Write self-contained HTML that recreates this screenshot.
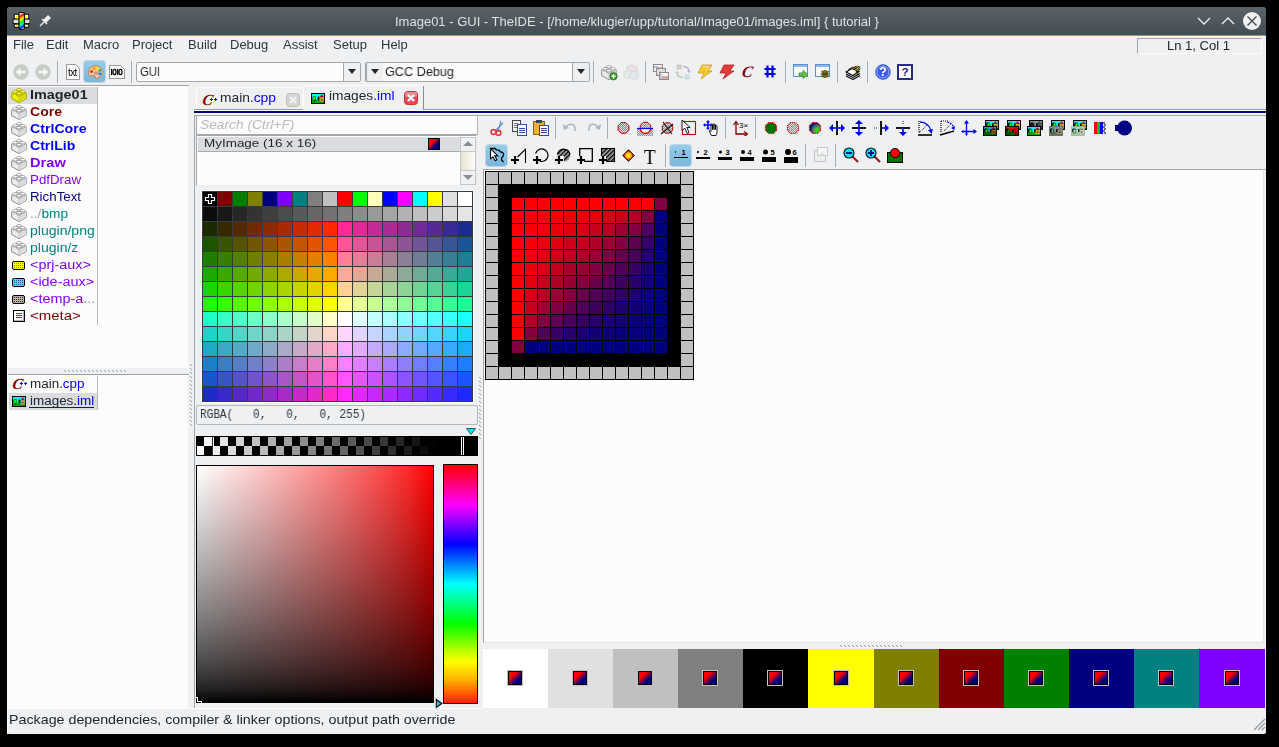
<!DOCTYPE html>
<html><head><meta charset="utf-8"><title>TheIDE</title>
<style>
html,body{margin:0;padding:0;}
body{width:1279px;height:747px;background:#000;position:relative;overflow:hidden;font-family:"Liberation Sans",sans-serif;}
.r{position:absolute;box-sizing:border-box;}
.t{position:absolute;white-space:pre;will-change:transform;}
</style></head><body>
<div class="r" style="left:7px;top:7px;width:1259px;height:727px;background:#eff0f1;border-radius:4px 4px 2px 2px;"></div>
<div class="r" style="left:7px;top:36px;width:1px;height:698px;background:#fafafa;"></div>
<div class="r" style="left:7px;top:7px;width:1259px;height:28px;background:linear-gradient(#5a6368,#454c52);border-radius:4px 4px 0 0;"></div>
<div class="r" style="left:7px;top:35px;width:1259px;height:1px;background:#3daee9;"></div>
<div class="r" style="left:8px;top:36px;width:1257px;height:1px;background:#f6f2ef;"></div>
<div class="t" style="left:395px;top:15.00px;font-size:13px;line-height:13px;color:#dfe1e3;font-weight:normal;font-family:'Liberation Sans';font-style:normal;">Image01 - GUI - TheIDE - [/home/klugier/upp/tutorial/Image01/images.iml] { tutorial }</div>
<svg class="r" style="left:12px;top:12px;" width="18" height="18" viewBox="0 0 18 18">
      <rect x="1.8" y="1.8" width="15.4" height="5.5" rx="1.2" fill="#0c0c0c"/>
      <rect x="0.5" y="6.6" width="18" height="5.5" rx="1.2" fill="#0c0c0c"/>
      <rect x="1.8" y="11.7" width="15.4" height="4" rx="1.2" fill="#0c0c0c"/>
      <rect x="2.8" y="2.8" width="3.8" height="3.5" fill="#fff"/><rect x="4" y="3.8" width="2.6" height="2.5" fill="#ffee00"/>
      <rect x="12.8" y="2.8" width="3.4" height="3.5" fill="#fff"/><rect x="12.8" y="3.8" width="2" height="2.5" fill="#ffee00"/>
      <rect x="1.5" y="7.6" width="5.1" height="3.5" fill="#dedede"/><rect x="12.8" y="7.6" width="4.7" height="3.5" fill="#dedede"/>
      <rect x="2.8" y="12.7" width="3.8" height="2" fill="#fff"/><rect x="4" y="12.9" width="2.6" height="1.4" fill="#ffee00"/>
      <rect x="12.8" y="12.7" width="3.4" height="2" fill="#fff"/><rect x="12.8" y="12.9" width="1.8" height="1.4" fill="#ffee00"/>
      <rect x="6.6" y="0" width="6.2" height="17.8" rx="1.5" fill="#0c0c0c"/>
      <defs><linearGradient id="rb" gradientUnits="userSpaceOnUse" x1="7.6" y1="1" x2="16.5" y2="13.5"><stop offset="0.1" stop-color="#ddd"/><stop offset="0.2" stop-color="#ff0000"/><stop offset="0.38" stop-color="#ffff00"/><stop offset="0.55" stop-color="#00ff00"/><stop offset="0.7" stop-color="#00ffff"/><stop offset="0.85" stop-color="#0000ff"/><stop offset="0.93" stop-color="#ccc"/></linearGradient></defs>
      <rect x="7.6" y="1" width="4.2" height="15.8" fill="url(#rb)"/>
    </svg>
<svg class="r" style="left:39px;top:14px;" width="13" height="13" viewBox="0 0 13 13"><path d="M1 12 L5 8" stroke="#eee" stroke-width="1.3"/><path d="M4 6 L7 9 L12 4 L9 1 Z" fill="#eee"/><path d="M3 5 L8 10" stroke="#eee" stroke-width="1.5"/></svg>
<svg class="r" style="left:1196px;top:14px;" width="16" height="14" viewBox="0 0 16 14"><path d="M2 4 L8 10 L14 4" stroke="#eef0f1" stroke-width="1.3" fill="none"/></svg>
<svg class="r" style="left:1220px;top:14px;" width="16" height="14" viewBox="0 0 16 14"><path d="M2 10 L8 4 L14 10" stroke="#eef0f1" stroke-width="1.3" fill="none"/></svg>
<svg class="r" style="left:1242px;top:11px;" width="20" height="20" viewBox="0 0 20 20"><circle cx="10" cy="10" r="9" fill="#eef0f1"/><path d="M5.5 5.5 L14.5 14.5 M14.5 5.5 L5.5 14.5" stroke="#454c53" stroke-width="1.4"/></svg>
<div class="t" style="left:13px;top:38.00px;font-size:13px;line-height:13px;color:#31363b;font-weight:normal;font-family:'Liberation Sans';font-style:normal;">File</div>
<div class="t" style="left:46px;top:38.00px;font-size:13px;line-height:13px;color:#31363b;font-weight:normal;font-family:'Liberation Sans';font-style:normal;">Edit</div>
<div class="t" style="left:82.5px;top:38.00px;font-size:13px;line-height:13px;color:#31363b;font-weight:normal;font-family:'Liberation Sans';font-style:normal;">Macro</div>
<div class="t" style="left:132px;top:38.00px;font-size:13px;line-height:13px;color:#31363b;font-weight:normal;font-family:'Liberation Sans';font-style:normal;">Project</div>
<div class="t" style="left:188px;top:38.00px;font-size:13px;line-height:13px;color:#31363b;font-weight:normal;font-family:'Liberation Sans';font-style:normal;">Build</div>
<div class="t" style="left:230px;top:38.00px;font-size:13px;line-height:13px;color:#31363b;font-weight:normal;font-family:'Liberation Sans';font-style:normal;">Debug</div>
<div class="t" style="left:282.5px;top:38.00px;font-size:13px;line-height:13px;color:#31363b;font-weight:normal;font-family:'Liberation Sans';font-style:normal;">Assist</div>
<div class="t" style="left:332.5px;top:38.00px;font-size:13px;line-height:13px;color:#31363b;font-weight:normal;font-family:'Liberation Sans';font-style:normal;">Setup</div>
<div class="t" style="left:381px;top:38.00px;font-size:13px;line-height:13px;color:#31363b;font-weight:normal;font-family:'Liberation Sans';font-style:normal;">Help</div>
<div class="r" style="left:1137px;top:38px;width:125px;height:16px;background:#eff0f1;border-top:1px solid #a4a7aa;border-left:1px solid #a4a7aa;border-bottom:1px solid #fcfcfc;border-right:1px solid #fcfcfc;"></div>
<div class="t" style="left:1167px;top:39.00px;font-size:13px;line-height:13px;color:#232629;font-weight:normal;font-family:'Liberation Sans';font-style:normal;">Ln 1, Col 1</div>
<svg class="r" style="left:12px;top:63px;" width="18" height="18" viewBox="0 0 18 18"><circle cx="9" cy="9" r="7.8" fill="#c5cfc5"/><path d="M13.5 9 H4.5" stroke="#f4f6f4" stroke-width="2.6"/><path d="M4 9 L8.5 4.5 V13.5 Z" fill="#f4f6f4"/></svg>
<svg class="r" style="left:34px;top:63px;" width="18" height="18" viewBox="0 0 18 18"><circle cx="9" cy="9" r="7.8" fill="#c5cfc5"/><path d="M4.5 9 H13.5" stroke="#f4f6f4" stroke-width="2.6"/><path d="M14 9 L9.5 4.5 V13.5 Z" fill="#f4f6f4"/></svg>
<div class="r" style="left:57px;top:61px;width:1px;height:22px;background:#a9acaf;"></div>
<svg class="r" style="left:66px;top:64px;" width="14" height="16" viewBox="0 0 14 16" shape-rendering="crispEdges"><path d="M0.5 0.5 H9.5 L13.5 4.5 V15.5 H0.5 Z" fill="#fff" stroke="#9a9a9a"/></svg>
<div class="t" style="left:67.8px;top:68.03px;font-size:10px;line-height:10px;color:#000;font-weight:normal;font-family:'Liberation Sans';font-style:normal;letter-spacing:-0.6px;">txt</div>
<div class="r" style="left:84px;top:61px;width:21px;height:21px;background:linear-gradient(#93cdea,#7db6dc);border-radius:3px;box-shadow:0 0 0 1px rgba(120,160,190,0.35);"></div>
<svg class="r" style="left:87px;top:64px;" width="16" height="16" viewBox="0 0 16 16"><path d="M3 4 C6 0.5 13 1 15 6 C16.5 10 13 14 9.5 14.5 C8 14.5 8.5 12 7 11.5 C5.5 11 4 13 2.5 11.5 C0.5 9.5 1.5 6 3 4 Z" fill="#f2c9a3" stroke="#c07a45" stroke-width="1"/>
      <circle cx="4.5" cy="7.5" r="1.6" fill="#e53935"/><circle cx="7" cy="4.5" r="1.6" fill="#ff9800"/><circle cx="10.2" cy="4" r="1.6" fill="#fdd835"/>
      <circle cx="12.8" cy="6.5" r="1.6" fill="#4caf50"/><circle cx="12.8" cy="9.8" r="1.6" fill="#1e88e5"/><circle cx="9" cy="9" r="1.3" fill="none" stroke="#c07a45"/></svg>
<svg class="r" style="left:109px;top:65px;" width="16" height="14" viewBox="0 0 16 14" shape-rendering="crispEdges"><path d="M0.5 0.5 H11.5 L15.5 4.5 V13.5 H0.5 Z" fill="#fff" stroke="#9a9a9a"/></svg>
<svg class="r" style="left:109px;top:65px;shape-rendering:auto;" width="16" height="14" viewBox="0 0 16 14" shape-rendering="crispEdges"><rect x="2" y="4" width="1.3" height="6" fill="#000"/><rect x="8" y="4" width="1.3" height="6" fill="#000"/><ellipse cx="5.5" cy="7" rx="1.5" ry="2.6" fill="none" stroke="#000" stroke-width="1.2"/><ellipse cx="11.5" cy="7" rx="1.5" ry="2.6" fill="none" stroke="#000" stroke-width="1.2"/></svg>
<div class="r" style="left:131px;top:61px;width:1px;height:22px;background:#a9acaf;"></div>
<div class="r" style="left:136px;top:62px;width:225px;height:20px;background:#fcfcfc;border:1px solid #a5a8ab;border-radius:2px;"></div>
<div class="r" style="left:343px;top:63px;width:17px;height:18px;background:#eff0f1;border-left:1px solid #a5a8ab;"></div>
<svg class="r" style="left:347px;top:69px;shape-rendering:auto;" width="10" height="6" viewBox="0 0 10 6" shape-rendering="crispEdges"><path d="M1 0 H9 L5 5 Z" fill="#232629"/></svg>
<div class="t" style="left:139.5px;top:64.50px;font-size:13px;line-height:13px;color:#232629;font-weight:normal;font-family:'Liberation Sans';font-style:normal;transform:scaleX(0.87);transform-origin:0 0;">GUI</div>
<div class="r" style="left:365px;top:62px;width:225px;height:20px;background:#fcfcfc;border:1px solid #a5a8ab;border-left:2px solid #a5a8ab;border-radius:2px;"></div>
<div class="r" style="left:367px;top:63px;width:16px;height:18px;background:#eff0f1;"></div>
<div class="r" style="left:572px;top:63px;width:17px;height:18px;background:#eff0f1;border-left:1px solid #a5a8ab;"></div>
<svg class="r" style="left:370px;top:69px;shape-rendering:auto;" width="10" height="6" viewBox="0 0 10 6" shape-rendering="crispEdges"><path d="M1 0 H9 L5 5 Z" fill="#232629"/></svg>
<svg class="r" style="left:576px;top:69px;shape-rendering:auto;" width="10" height="6" viewBox="0 0 10 6" shape-rendering="crispEdges"><path d="M1 0 H9 L5 5 Z" fill="#232629"/></svg>
<div class="t" style="left:385px;top:64.50px;font-size:13px;line-height:13px;color:#232629;font-weight:normal;font-family:'Liberation Sans';font-style:normal;transform:scaleX(0.975);transform-origin:0 0;">GCC Debug</div>
<div class="r" style="left:593px;top:61px;width:1px;height:22px;background:#a9acaf;"></div>
<svg class="r" style="left:601px;top:64px;" width="17" height="17" viewBox="0 0 17 17">
      <path d="M0.7 5.8 L8 2.2 L15.3 5.8 V11.6 L8 15.6 L0.7 11.6 Z" fill="#ececec" stroke="#8a8a8a" stroke-width="1" stroke-linejoin="round"/>
      <path d="M0.7 5.8 L8 9.4 L15.3 5.8 L8 2.2 Z" fill="#f8f8f8"/>
      <path d="M8 9.4 L15.3 5.8 V11.6 L8 15.6 Z" fill="#dcdcdc"/>
      <path d="M8 9.4 V15.4" stroke="#8a8a8a" stroke-width="0.5" opacity="0.6"/>
      <path d="M5.6 2.6 V4.0 A2.4 1.2 0 0 0 10.4 4.0 V2.6" fill="#e4e4e4" stroke="#8a8a8a" stroke-width="0.8"/><ellipse cx="8" cy="2.6" rx="2.4" ry="1.2" fill="#ffffff" stroke="#8a8a8a" stroke-width="0.6"/><path d="M1.9 4.6 V6.0 A2.4 1.2 0 0 0 6.699999999999999 6.0 V4.6" fill="#e4e4e4" stroke="#8a8a8a" stroke-width="0.8"/><ellipse cx="4.3" cy="4.6" rx="2.4" ry="1.2" fill="#ffffff" stroke="#8a8a8a" stroke-width="0.6"/><path d="M9.299999999999999 4.6 V6.0 A2.4 1.2 0 0 0 14.1 6.0 V4.6" fill="#e4e4e4" stroke="#8a8a8a" stroke-width="0.8"/><ellipse cx="11.7" cy="4.6" rx="2.4" ry="1.2" fill="#ffffff" stroke="#8a8a8a" stroke-width="0.6"/><path d="M5.6 6.6 V8.0 A2.4 1.2 0 0 0 10.4 8.0 V6.6" fill="#e4e4e4" stroke="#8a8a8a" stroke-width="0.8"/><ellipse cx="8" cy="6.6" rx="2.4" ry="1.2" fill="#ffffff" stroke="#8a8a8a" stroke-width="0.6"/>
    </svg>
<svg class="r" style="left:609px;top:72px;" width="9" height="9" viewBox="0 0 9 9"><circle cx="4.5" cy="4.3" r="3.7" fill="#3c9a2c" stroke="#2a6e1e" stroke-width="0.7"/><path d="M4.5 2.2 V6.4 M2.4 4.3 H6.6" stroke="#fff" stroke-width="1.4"/></svg>
<svg class="r" style="left:623px;top:64px;" width="16" height="16" viewBox="0 0 16 16"><g opacity="0.55"><path d="M4 3 L9 1 L14 3 V8 L9 10 L4 8 Z" fill="#e8d8d8" stroke="#c8b0b0" stroke-width="0.8"/><path d="M1 8 L5 6 L9 8 V13 L5 15 L1 13 Z" fill="#e0e8e0" stroke="#b8c8b8" stroke-width="0.8"/><path d="M7 9 L11 7 L15 9 V14 L11 16 L7 14 Z" fill="#dde4ea" stroke="#b0c0cc" stroke-width="0.8"/></g></svg>
<div class="r" style="left:645px;top:61px;width:1px;height:22px;background:#a9acaf;"></div>
<svg class="r" style="left:653px;top:64px;" width="16" height="16" viewBox="0 0 16 16" shape-rendering="crispEdges"><rect x="0.5" y="0.5" width="9" height="7" fill="#f4f4f4" stroke="#8a8a8a"/><rect x="1" y="2" width="4" height="2" fill="#b0b8d8"/><rect x="5" y="3" width="4" height="1" fill="#d8a0a0"/>
      <rect x="3.5" y="4.5" width="9" height="7" fill="#e8e8f0" stroke="#8a8a8a"/><path d="M4 5 L12 11 M12 5 L4 11" stroke="#d8d0a0"/>
      <rect x="6.5" y="8.5" width="9" height="7" fill="#f6f6f6" stroke="#8a8a8a"/><rect x="7" y="12" width="8" height="3" fill="#d8a8a8"/><path d="M7 9 L10 12 L7 15" fill="#c8c8e0"/></svg>
<svg class="r" style="left:675px;top:64px;" width="16" height="16" viewBox="0 0 16 16"><rect x="2" y="1" width="4" height="4" fill="#dccfcf" stroke="#c0b0b0" stroke-width="0.6"/><rect x="10" y="11" width="4" height="4" fill="#cfe6e6" stroke="#b0c8c8" stroke-width="0.6"/><path d="M8 2.5 C12 2.5 14 5 14 8" stroke="#b8b0d0" stroke-width="1.5" fill="none"/><path d="M12 7 L14 9 L16 7" fill="#b8b0d0"/><path d="M8 13.5 C4 13.5 2 11 2 8" stroke="#b8ccb8" stroke-width="1.5" fill="none"/><path d="M0 9 L2 7 L4 9" fill="#b8ccb8"/></svg>
<svg class="r" style="left:697px;top:64px;" width="16" height="16" viewBox="0 0 16 16"><path d="M5 1 H15 L11 7 H15 L4 15 L7 9 H1 Z" fill="#f2c838" stroke="#d4a010" stroke-width="0.8"/><path d="M6 2.5 H12 L9 6" stroke="#fbe99a" stroke-width="1" fill="none"/></svg>
<svg class="r" style="left:719px;top:64px;" width="16" height="16" viewBox="0 0 16 16"><path d="M5 1 H15 L11 7 H15 L4 15 L7 9 H1 Z" fill="#e03a3a" stroke="#b82020" stroke-width="0.8"/></svg>
<svg class="r" style="left:740px;top:63px;" width="16" height="16" viewBox="0 0 16 16"><g transform="translate(0,14.3) skewX(-10)"><text x="1.2" y="0" font-family="Liberation Serif" font-style="italic" font-weight="bold" font-size="16" fill="#800000">C</text></g></svg>
<svg class="r" style="left:764px;top:65px;shape-rendering:auto;" width="12" height="13" viewBox="0 0 12 13" shape-rendering="crispEdges"><path d="M3.5 0.5 V12.5 M8.5 0.5 V12.5 M0.5 4 H11.5 M0.5 9 H11.5" stroke="#0000e0" stroke-width="2.2"/></svg>
<div class="r" style="left:785px;top:61px;width:1px;height:22px;background:#a9acaf;"></div>
<svg class="r" style="left:793px;top:64px;shape-rendering:auto;" width="16" height="16" viewBox="0 0 16 16" shape-rendering="crispEdges"><rect x="0.5" y="0.5" width="14" height="12" fill="#f8f8ff" stroke="#5b8fd6"/><rect x="1" y="1" width="13" height="2" fill="#8fb6ea"/><path d="M6 9 H10 V6.5 L15 10.5 L10 14.5 V12 H6 Z" fill="#6cc04a" stroke="#3d8a2a" stroke-width="0.8"/></svg>
<svg class="r" style="left:815px;top:64px;shape-rendering:auto;" width="16" height="16" viewBox="0 0 16 16" shape-rendering="crispEdges"><rect x="0.5" y="0.5" width="14" height="12" fill="#f8f8ff" stroke="#5b8fd6"/><rect x="1" y="1" width="13" height="2" fill="#8fb6ea"/><ellipse cx="10" cy="10" rx="3.5" ry="4" fill="#6f6a1a"/><path d="M6 7 L14 13 M14 7 L6 13 M5.5 10 H14.5" stroke="#4f4a10" stroke-width="0.9"/></svg>
<div class="r" style="left:837px;top:61px;width:1px;height:22px;background:#a9acaf;"></div>
<svg class="r" style="left:845px;top:64px;" width="16" height="16" viewBox="0 0 16 16"><path d="M1 12 L8 15.5 L15 11.5" stroke="#000" fill="none" stroke-width="1.1"/><path d="M1 10 L8 13.5 L15 9.5" stroke="#000" fill="none" stroke-width="1.1"/><path d="M1 8 L7 4.5 L14 7.5 L8 11.5 Z" fill="#fff" stroke="#000" stroke-width="1.1"/><path d="M3 6 L8 3 L12 5" fill="none" stroke="#000" stroke-width="0.9"/><text x="12" y="10" text-anchor="middle" font-family="Liberation Sans" font-weight="bold" font-size="11" fill="#ffe800" stroke="#000" stroke-width="0.7">?</text></svg>
<div class="r" style="left:867px;top:61px;width:1px;height:22px;background:#a9acaf;"></div>
<svg class="r" style="left:875px;top:64px;" width="16" height="16" viewBox="0 0 16 16"><circle cx="8" cy="8" r="7.4" fill="#3a5ce6" stroke="#2846d0" stroke-width="0.6"/><circle cx="8" cy="8" r="6" fill="none" stroke="#c0ccf8" stroke-width="0.7"/><text x="8" y="12.3" text-anchor="middle" font-family="Liberation Sans" font-weight="bold" font-size="12" fill="#fff">?</text></svg>
<svg class="r" style="left:897px;top:64px;" width="16" height="16" viewBox="0 0 16 16"><rect x="1" y="1" width="14" height="14" fill="#fff" stroke="#2a2a8a" stroke-width="2"/><text x="8" y="12.3" text-anchor="middle" font-family="Liberation Sans" font-weight="bold" font-size="11.5" fill="#202080">?</text></svg>
<div class="r" style="left:8px;top:85px;width:181px;height:1px;background:#9ea2a6;"></div>
<div class="r" style="left:8px;top:86px;width:180px;height:282px;background:#fcfcfc;"></div>
<div class="r" style="left:8px;top:87px;width:89px;height:17px;background:#dadcdf;"></div>
<div class="r" style="left:97px;top:87px;width:1px;height:238px;background:#b5b8bb;"></div>
<svg class="r" style="left:11px;top:87px;" width="17" height="17" viewBox="0 0 17 17">
      <path d="M0.7 5.8 L8 2.2 L15.3 5.8 V11.6 L8 15.6 L0.7 11.6 Z" fill="#eeee00" stroke="#9a9a00" stroke-width="1" stroke-linejoin="round"/>
      <path d="M0.7 5.8 L8 9.4 L15.3 5.8 L8 2.2 Z" fill="#ffff40"/>
      <path d="M8 9.4 L15.3 5.8 V11.6 L8 15.6 Z" fill="#dada00"/>
      <path d="M8 9.4 V15.4" stroke="#9a9a00" stroke-width="0.5" opacity="0.6"/>
      <path d="M5.6 2.6 V4.0 A2.4 1.2 0 0 0 10.4 4.0 V2.6" fill="#e0e000" stroke="#9a9a00" stroke-width="0.8"/><ellipse cx="8" cy="2.6" rx="2.4" ry="1.2" fill="#ffff60" stroke="#9a9a00" stroke-width="0.6"/><path d="M1.9 4.6 V6.0 A2.4 1.2 0 0 0 6.699999999999999 6.0 V4.6" fill="#e0e000" stroke="#9a9a00" stroke-width="0.8"/><ellipse cx="4.3" cy="4.6" rx="2.4" ry="1.2" fill="#ffff60" stroke="#9a9a00" stroke-width="0.6"/><path d="M9.299999999999999 4.6 V6.0 A2.4 1.2 0 0 0 14.1 6.0 V4.6" fill="#e0e000" stroke="#9a9a00" stroke-width="0.8"/><ellipse cx="11.7" cy="4.6" rx="2.4" ry="1.2" fill="#ffff60" stroke="#9a9a00" stroke-width="0.6"/><path d="M5.6 6.6 V8.0 A2.4 1.2 0 0 0 10.4 8.0 V6.6" fill="#e0e000" stroke="#9a9a00" stroke-width="0.8"/><ellipse cx="8" cy="6.6" rx="2.4" ry="1.2" fill="#ffff60" stroke="#9a9a00" stroke-width="0.6"/>
    </svg>
<div class="t" style="left:30px;top:88.54px;font-size:12px;line-height:12px;font-weight:bold;transform:scaleX(1.2);transform-origin:0 0;"><span style="color:#232629">Image01</span></div>
<svg class="r" style="left:11px;top:104px;" width="17" height="17" viewBox="0 0 17 17">
      <path d="M0.7 5.8 L8 2.2 L15.3 5.8 V11.6 L8 15.6 L0.7 11.6 Z" fill="#ececec" stroke="#8a8a8a" stroke-width="1" stroke-linejoin="round"/>
      <path d="M0.7 5.8 L8 9.4 L15.3 5.8 L8 2.2 Z" fill="#f8f8f8"/>
      <path d="M8 9.4 L15.3 5.8 V11.6 L8 15.6 Z" fill="#dcdcdc"/>
      <path d="M8 9.4 V15.4" stroke="#8a8a8a" stroke-width="0.5" opacity="0.6"/>
      <path d="M5.6 2.6 V4.0 A2.4 1.2 0 0 0 10.4 4.0 V2.6" fill="#e4e4e4" stroke="#8a8a8a" stroke-width="0.8"/><ellipse cx="8" cy="2.6" rx="2.4" ry="1.2" fill="#ffffff" stroke="#8a8a8a" stroke-width="0.6"/><path d="M1.9 4.6 V6.0 A2.4 1.2 0 0 0 6.699999999999999 6.0 V4.6" fill="#e4e4e4" stroke="#8a8a8a" stroke-width="0.8"/><ellipse cx="4.3" cy="4.6" rx="2.4" ry="1.2" fill="#ffffff" stroke="#8a8a8a" stroke-width="0.6"/><path d="M9.299999999999999 4.6 V6.0 A2.4 1.2 0 0 0 14.1 6.0 V4.6" fill="#e4e4e4" stroke="#8a8a8a" stroke-width="0.8"/><ellipse cx="11.7" cy="4.6" rx="2.4" ry="1.2" fill="#ffffff" stroke="#8a8a8a" stroke-width="0.6"/><path d="M5.6 6.6 V8.0 A2.4 1.2 0 0 0 10.4 8.0 V6.6" fill="#e4e4e4" stroke="#8a8a8a" stroke-width="0.8"/><ellipse cx="8" cy="6.6" rx="2.4" ry="1.2" fill="#ffffff" stroke="#8a8a8a" stroke-width="0.6"/>
    </svg>
<div class="t" style="left:30px;top:105.54px;font-size:12px;line-height:12px;font-weight:bold;transform:scaleX(1.17);transform-origin:0 0;"><span style="color:#800000">Core</span></div>
<svg class="r" style="left:11px;top:121px;" width="17" height="17" viewBox="0 0 17 17">
      <path d="M0.7 5.8 L8 2.2 L15.3 5.8 V11.6 L8 15.6 L0.7 11.6 Z" fill="#ececec" stroke="#8a8a8a" stroke-width="1" stroke-linejoin="round"/>
      <path d="M0.7 5.8 L8 9.4 L15.3 5.8 L8 2.2 Z" fill="#f8f8f8"/>
      <path d="M8 9.4 L15.3 5.8 V11.6 L8 15.6 Z" fill="#dcdcdc"/>
      <path d="M8 9.4 V15.4" stroke="#8a8a8a" stroke-width="0.5" opacity="0.6"/>
      <path d="M5.6 2.6 V4.0 A2.4 1.2 0 0 0 10.4 4.0 V2.6" fill="#e4e4e4" stroke="#8a8a8a" stroke-width="0.8"/><ellipse cx="8" cy="2.6" rx="2.4" ry="1.2" fill="#ffffff" stroke="#8a8a8a" stroke-width="0.6"/><path d="M1.9 4.6 V6.0 A2.4 1.2 0 0 0 6.699999999999999 6.0 V4.6" fill="#e4e4e4" stroke="#8a8a8a" stroke-width="0.8"/><ellipse cx="4.3" cy="4.6" rx="2.4" ry="1.2" fill="#ffffff" stroke="#8a8a8a" stroke-width="0.6"/><path d="M9.299999999999999 4.6 V6.0 A2.4 1.2 0 0 0 14.1 6.0 V4.6" fill="#e4e4e4" stroke="#8a8a8a" stroke-width="0.8"/><ellipse cx="11.7" cy="4.6" rx="2.4" ry="1.2" fill="#ffffff" stroke="#8a8a8a" stroke-width="0.6"/><path d="M5.6 6.6 V8.0 A2.4 1.2 0 0 0 10.4 8.0 V6.6" fill="#e4e4e4" stroke="#8a8a8a" stroke-width="0.8"/><ellipse cx="8" cy="6.6" rx="2.4" ry="1.2" fill="#ffffff" stroke="#8a8a8a" stroke-width="0.6"/>
    </svg>
<div class="t" style="left:30px;top:122.54px;font-size:12px;line-height:12px;font-weight:bold;transform:scaleX(1.18);transform-origin:0 0;"><span style="color:#0000ff">CtrlCore</span></div>
<svg class="r" style="left:11px;top:138px;" width="17" height="17" viewBox="0 0 17 17">
      <path d="M0.7 5.8 L8 2.2 L15.3 5.8 V11.6 L8 15.6 L0.7 11.6 Z" fill="#ececec" stroke="#8a8a8a" stroke-width="1" stroke-linejoin="round"/>
      <path d="M0.7 5.8 L8 9.4 L15.3 5.8 L8 2.2 Z" fill="#f8f8f8"/>
      <path d="M8 9.4 L15.3 5.8 V11.6 L8 15.6 Z" fill="#dcdcdc"/>
      <path d="M8 9.4 V15.4" stroke="#8a8a8a" stroke-width="0.5" opacity="0.6"/>
      <path d="M5.6 2.6 V4.0 A2.4 1.2 0 0 0 10.4 4.0 V2.6" fill="#e4e4e4" stroke="#8a8a8a" stroke-width="0.8"/><ellipse cx="8" cy="2.6" rx="2.4" ry="1.2" fill="#ffffff" stroke="#8a8a8a" stroke-width="0.6"/><path d="M1.9 4.6 V6.0 A2.4 1.2 0 0 0 6.699999999999999 6.0 V4.6" fill="#e4e4e4" stroke="#8a8a8a" stroke-width="0.8"/><ellipse cx="4.3" cy="4.6" rx="2.4" ry="1.2" fill="#ffffff" stroke="#8a8a8a" stroke-width="0.6"/><path d="M9.299999999999999 4.6 V6.0 A2.4 1.2 0 0 0 14.1 6.0 V4.6" fill="#e4e4e4" stroke="#8a8a8a" stroke-width="0.8"/><ellipse cx="11.7" cy="4.6" rx="2.4" ry="1.2" fill="#ffffff" stroke="#8a8a8a" stroke-width="0.6"/><path d="M5.6 6.6 V8.0 A2.4 1.2 0 0 0 10.4 8.0 V6.6" fill="#e4e4e4" stroke="#8a8a8a" stroke-width="0.8"/><ellipse cx="8" cy="6.6" rx="2.4" ry="1.2" fill="#ffffff" stroke="#8a8a8a" stroke-width="0.6"/>
    </svg>
<div class="t" style="left:30px;top:139.54px;font-size:12px;line-height:12px;font-weight:bold;transform:scaleX(1.17);transform-origin:0 0;"><span style="color:#0000ff">CtrlLib</span></div>
<svg class="r" style="left:11px;top:155px;" width="17" height="17" viewBox="0 0 17 17">
      <path d="M0.7 5.8 L8 2.2 L15.3 5.8 V11.6 L8 15.6 L0.7 11.6 Z" fill="#ececec" stroke="#8a8a8a" stroke-width="1" stroke-linejoin="round"/>
      <path d="M0.7 5.8 L8 9.4 L15.3 5.8 L8 2.2 Z" fill="#f8f8f8"/>
      <path d="M8 9.4 L15.3 5.8 V11.6 L8 15.6 Z" fill="#dcdcdc"/>
      <path d="M8 9.4 V15.4" stroke="#8a8a8a" stroke-width="0.5" opacity="0.6"/>
      <path d="M5.6 2.6 V4.0 A2.4 1.2 0 0 0 10.4 4.0 V2.6" fill="#e4e4e4" stroke="#8a8a8a" stroke-width="0.8"/><ellipse cx="8" cy="2.6" rx="2.4" ry="1.2" fill="#ffffff" stroke="#8a8a8a" stroke-width="0.6"/><path d="M1.9 4.6 V6.0 A2.4 1.2 0 0 0 6.699999999999999 6.0 V4.6" fill="#e4e4e4" stroke="#8a8a8a" stroke-width="0.8"/><ellipse cx="4.3" cy="4.6" rx="2.4" ry="1.2" fill="#ffffff" stroke="#8a8a8a" stroke-width="0.6"/><path d="M9.299999999999999 4.6 V6.0 A2.4 1.2 0 0 0 14.1 6.0 V4.6" fill="#e4e4e4" stroke="#8a8a8a" stroke-width="0.8"/><ellipse cx="11.7" cy="4.6" rx="2.4" ry="1.2" fill="#ffffff" stroke="#8a8a8a" stroke-width="0.6"/><path d="M5.6 6.6 V8.0 A2.4 1.2 0 0 0 10.4 8.0 V6.6" fill="#e4e4e4" stroke="#8a8a8a" stroke-width="0.8"/><ellipse cx="8" cy="6.6" rx="2.4" ry="1.2" fill="#ffffff" stroke="#8a8a8a" stroke-width="0.6"/>
    </svg>
<div class="t" style="left:30px;top:156.54px;font-size:12px;line-height:12px;font-weight:bold;transform:scaleX(1.22);transform-origin:0 0;"><span style="color:#8000ff">Draw</span></div>
<svg class="r" style="left:11px;top:172px;" width="17" height="17" viewBox="0 0 17 17">
      <path d="M0.7 5.8 L8 2.2 L15.3 5.8 V11.6 L8 15.6 L0.7 11.6 Z" fill="#ececec" stroke="#8a8a8a" stroke-width="1" stroke-linejoin="round"/>
      <path d="M0.7 5.8 L8 9.4 L15.3 5.8 L8 2.2 Z" fill="#f8f8f8"/>
      <path d="M8 9.4 L15.3 5.8 V11.6 L8 15.6 Z" fill="#dcdcdc"/>
      <path d="M8 9.4 V15.4" stroke="#8a8a8a" stroke-width="0.5" opacity="0.6"/>
      <path d="M5.6 2.6 V4.0 A2.4 1.2 0 0 0 10.4 4.0 V2.6" fill="#e4e4e4" stroke="#8a8a8a" stroke-width="0.8"/><ellipse cx="8" cy="2.6" rx="2.4" ry="1.2" fill="#ffffff" stroke="#8a8a8a" stroke-width="0.6"/><path d="M1.9 4.6 V6.0 A2.4 1.2 0 0 0 6.699999999999999 6.0 V4.6" fill="#e4e4e4" stroke="#8a8a8a" stroke-width="0.8"/><ellipse cx="4.3" cy="4.6" rx="2.4" ry="1.2" fill="#ffffff" stroke="#8a8a8a" stroke-width="0.6"/><path d="M9.299999999999999 4.6 V6.0 A2.4 1.2 0 0 0 14.1 6.0 V4.6" fill="#e4e4e4" stroke="#8a8a8a" stroke-width="0.8"/><ellipse cx="11.7" cy="4.6" rx="2.4" ry="1.2" fill="#ffffff" stroke="#8a8a8a" stroke-width="0.6"/><path d="M5.6 6.6 V8.0 A2.4 1.2 0 0 0 10.4 8.0 V6.6" fill="#e4e4e4" stroke="#8a8a8a" stroke-width="0.8"/><ellipse cx="8" cy="6.6" rx="2.4" ry="1.2" fill="#ffffff" stroke="#8a8a8a" stroke-width="0.6"/>
    </svg>
<div class="t" style="left:30px;top:173.54px;font-size:12px;line-height:12px;font-weight:normal;transform:scaleX(1.11);transform-origin:0 0;"><span style="color:#8000ff">PdfDraw</span></div>
<svg class="r" style="left:11px;top:189px;" width="17" height="17" viewBox="0 0 17 17">
      <path d="M0.7 5.8 L8 2.2 L15.3 5.8 V11.6 L8 15.6 L0.7 11.6 Z" fill="#ececec" stroke="#8a8a8a" stroke-width="1" stroke-linejoin="round"/>
      <path d="M0.7 5.8 L8 9.4 L15.3 5.8 L8 2.2 Z" fill="#f8f8f8"/>
      <path d="M8 9.4 L15.3 5.8 V11.6 L8 15.6 Z" fill="#dcdcdc"/>
      <path d="M8 9.4 V15.4" stroke="#8a8a8a" stroke-width="0.5" opacity="0.6"/>
      <path d="M5.6 2.6 V4.0 A2.4 1.2 0 0 0 10.4 4.0 V2.6" fill="#e4e4e4" stroke="#8a8a8a" stroke-width="0.8"/><ellipse cx="8" cy="2.6" rx="2.4" ry="1.2" fill="#ffffff" stroke="#8a8a8a" stroke-width="0.6"/><path d="M1.9 4.6 V6.0 A2.4 1.2 0 0 0 6.699999999999999 6.0 V4.6" fill="#e4e4e4" stroke="#8a8a8a" stroke-width="0.8"/><ellipse cx="4.3" cy="4.6" rx="2.4" ry="1.2" fill="#ffffff" stroke="#8a8a8a" stroke-width="0.6"/><path d="M9.299999999999999 4.6 V6.0 A2.4 1.2 0 0 0 14.1 6.0 V4.6" fill="#e4e4e4" stroke="#8a8a8a" stroke-width="0.8"/><ellipse cx="11.7" cy="4.6" rx="2.4" ry="1.2" fill="#ffffff" stroke="#8a8a8a" stroke-width="0.6"/><path d="M5.6 6.6 V8.0 A2.4 1.2 0 0 0 10.4 8.0 V6.6" fill="#e4e4e4" stroke="#8a8a8a" stroke-width="0.8"/><ellipse cx="8" cy="6.6" rx="2.4" ry="1.2" fill="#ffffff" stroke="#8a8a8a" stroke-width="0.6"/>
    </svg>
<div class="t" style="left:30px;top:190.54px;font-size:12px;line-height:12px;font-weight:normal;transform:scaleX(1.11);transform-origin:0 0;"><span style="color:#000080">RichText</span></div>
<svg class="r" style="left:11px;top:206px;" width="17" height="17" viewBox="0 0 17 17">
      <path d="M0.7 5.8 L8 2.2 L15.3 5.8 V11.6 L8 15.6 L0.7 11.6 Z" fill="#ececec" stroke="#8a8a8a" stroke-width="1" stroke-linejoin="round"/>
      <path d="M0.7 5.8 L8 9.4 L15.3 5.8 L8 2.2 Z" fill="#f8f8f8"/>
      <path d="M8 9.4 L15.3 5.8 V11.6 L8 15.6 Z" fill="#dcdcdc"/>
      <path d="M8 9.4 V15.4" stroke="#8a8a8a" stroke-width="0.5" opacity="0.6"/>
      <path d="M5.6 2.6 V4.0 A2.4 1.2 0 0 0 10.4 4.0 V2.6" fill="#e4e4e4" stroke="#8a8a8a" stroke-width="0.8"/><ellipse cx="8" cy="2.6" rx="2.4" ry="1.2" fill="#ffffff" stroke="#8a8a8a" stroke-width="0.6"/><path d="M1.9 4.6 V6.0 A2.4 1.2 0 0 0 6.699999999999999 6.0 V4.6" fill="#e4e4e4" stroke="#8a8a8a" stroke-width="0.8"/><ellipse cx="4.3" cy="4.6" rx="2.4" ry="1.2" fill="#ffffff" stroke="#8a8a8a" stroke-width="0.6"/><path d="M9.299999999999999 4.6 V6.0 A2.4 1.2 0 0 0 14.1 6.0 V4.6" fill="#e4e4e4" stroke="#8a8a8a" stroke-width="0.8"/><ellipse cx="11.7" cy="4.6" rx="2.4" ry="1.2" fill="#ffffff" stroke="#8a8a8a" stroke-width="0.6"/><path d="M5.6 6.6 V8.0 A2.4 1.2 0 0 0 10.4 8.0 V6.6" fill="#e4e4e4" stroke="#8a8a8a" stroke-width="0.8"/><ellipse cx="8" cy="6.6" rx="2.4" ry="1.2" fill="#ffffff" stroke="#8a8a8a" stroke-width="0.6"/>
    </svg>
<div class="t" style="left:30px;top:207.54px;font-size:12px;line-height:12px;font-weight:normal;transform:scaleX(1.14);transform-origin:0 0;"><span style="color:#a0a0a0">../</span><span style="color:#008080">bmp</span></div>
<svg class="r" style="left:11px;top:223px;" width="17" height="17" viewBox="0 0 17 17">
      <path d="M0.7 5.8 L8 2.2 L15.3 5.8 V11.6 L8 15.6 L0.7 11.6 Z" fill="#ececec" stroke="#8a8a8a" stroke-width="1" stroke-linejoin="round"/>
      <path d="M0.7 5.8 L8 9.4 L15.3 5.8 L8 2.2 Z" fill="#f8f8f8"/>
      <path d="M8 9.4 L15.3 5.8 V11.6 L8 15.6 Z" fill="#dcdcdc"/>
      <path d="M8 9.4 V15.4" stroke="#8a8a8a" stroke-width="0.5" opacity="0.6"/>
      <path d="M5.6 2.6 V4.0 A2.4 1.2 0 0 0 10.4 4.0 V2.6" fill="#e4e4e4" stroke="#8a8a8a" stroke-width="0.8"/><ellipse cx="8" cy="2.6" rx="2.4" ry="1.2" fill="#ffffff" stroke="#8a8a8a" stroke-width="0.6"/><path d="M1.9 4.6 V6.0 A2.4 1.2 0 0 0 6.699999999999999 6.0 V4.6" fill="#e4e4e4" stroke="#8a8a8a" stroke-width="0.8"/><ellipse cx="4.3" cy="4.6" rx="2.4" ry="1.2" fill="#ffffff" stroke="#8a8a8a" stroke-width="0.6"/><path d="M9.299999999999999 4.6 V6.0 A2.4 1.2 0 0 0 14.1 6.0 V4.6" fill="#e4e4e4" stroke="#8a8a8a" stroke-width="0.8"/><ellipse cx="11.7" cy="4.6" rx="2.4" ry="1.2" fill="#ffffff" stroke="#8a8a8a" stroke-width="0.6"/><path d="M5.6 6.6 V8.0 A2.4 1.2 0 0 0 10.4 8.0 V6.6" fill="#e4e4e4" stroke="#8a8a8a" stroke-width="0.8"/><ellipse cx="8" cy="6.6" rx="2.4" ry="1.2" fill="#ffffff" stroke="#8a8a8a" stroke-width="0.6"/>
    </svg>
<div class="t" style="left:30px;top:224.54px;font-size:12px;line-height:12px;font-weight:normal;transform:scaleX(1.17);transform-origin:0 0;"><span style="color:#008080">plugin/png</span></div>
<svg class="r" style="left:11px;top:240px;" width="17" height="17" viewBox="0 0 17 17">
      <path d="M0.7 5.8 L8 2.2 L15.3 5.8 V11.6 L8 15.6 L0.7 11.6 Z" fill="#ececec" stroke="#8a8a8a" stroke-width="1" stroke-linejoin="round"/>
      <path d="M0.7 5.8 L8 9.4 L15.3 5.8 L8 2.2 Z" fill="#f8f8f8"/>
      <path d="M8 9.4 L15.3 5.8 V11.6 L8 15.6 Z" fill="#dcdcdc"/>
      <path d="M8 9.4 V15.4" stroke="#8a8a8a" stroke-width="0.5" opacity="0.6"/>
      <path d="M5.6 2.6 V4.0 A2.4 1.2 0 0 0 10.4 4.0 V2.6" fill="#e4e4e4" stroke="#8a8a8a" stroke-width="0.8"/><ellipse cx="8" cy="2.6" rx="2.4" ry="1.2" fill="#ffffff" stroke="#8a8a8a" stroke-width="0.6"/><path d="M1.9 4.6 V6.0 A2.4 1.2 0 0 0 6.699999999999999 6.0 V4.6" fill="#e4e4e4" stroke="#8a8a8a" stroke-width="0.8"/><ellipse cx="4.3" cy="4.6" rx="2.4" ry="1.2" fill="#ffffff" stroke="#8a8a8a" stroke-width="0.6"/><path d="M9.299999999999999 4.6 V6.0 A2.4 1.2 0 0 0 14.1 6.0 V4.6" fill="#e4e4e4" stroke="#8a8a8a" stroke-width="0.8"/><ellipse cx="11.7" cy="4.6" rx="2.4" ry="1.2" fill="#ffffff" stroke="#8a8a8a" stroke-width="0.6"/><path d="M5.6 6.6 V8.0 A2.4 1.2 0 0 0 10.4 8.0 V6.6" fill="#e4e4e4" stroke="#8a8a8a" stroke-width="0.8"/><ellipse cx="8" cy="6.6" rx="2.4" ry="1.2" fill="#ffffff" stroke="#8a8a8a" stroke-width="0.6"/>
    </svg>
<div class="t" style="left:30px;top:241.54px;font-size:12px;line-height:12px;font-weight:normal;transform:scaleX(1.17);transform-origin:0 0;"><span style="color:#008080">plugin/z</span></div>
<svg class="r" style="left:12px;top:261px;shape-rendering:auto;" width="13" height="9" viewBox="0 0 13 9" shape-rendering="crispEdges"><rect x="0.5" y="0.5" width="12" height="8" rx="1.5" fill="#ffff00" stroke="#000"/><rect x="2" y="2" width="1" height="1" fill="#a08000"/><rect x="2" y="4" width="1" height="1" fill="#a08000"/><rect x="2" y="6" width="1" height="1" fill="#a08000"/><rect x="4" y="2" width="1" height="1" fill="#a08000"/><rect x="4" y="4" width="1" height="1" fill="#a08000"/><rect x="4" y="6" width="1" height="1" fill="#a08000"/><rect x="6" y="2" width="1" height="1" fill="#a08000"/><rect x="6" y="4" width="1" height="1" fill="#a08000"/><rect x="6" y="6" width="1" height="1" fill="#a08000"/><rect x="8" y="2" width="1" height="1" fill="#a08000"/><rect x="8" y="4" width="1" height="1" fill="#a08000"/><rect x="8" y="6" width="1" height="1" fill="#a08000"/><rect x="10" y="2" width="1" height="1" fill="#a08000"/><rect x="10" y="4" width="1" height="1" fill="#a08000"/><rect x="10" y="6" width="1" height="1" fill="#a08000"/></svg>
<div class="t" style="left:30px;top:258.54px;font-size:12px;line-height:12px;font-weight:normal;transform:scaleX(1.2);transform-origin:0 0;"><span style="color:#8000ff">&lt;prj-aux&gt;</span></div>
<svg class="r" style="left:12px;top:278px;shape-rendering:auto;" width="13" height="9" viewBox="0 0 13 9" shape-rendering="crispEdges"><rect x="0.5" y="0.5" width="12" height="8" rx="1.5" fill="#00ffff" stroke="#000"/><rect x="2" y="2" width="1" height="1" fill="#006080"/><rect x="2" y="4" width="1" height="1" fill="#006080"/><rect x="2" y="6" width="1" height="1" fill="#006080"/><rect x="4" y="2" width="1" height="1" fill="#006080"/><rect x="4" y="4" width="1" height="1" fill="#006080"/><rect x="4" y="6" width="1" height="1" fill="#006080"/><rect x="6" y="2" width="1" height="1" fill="#006080"/><rect x="6" y="4" width="1" height="1" fill="#006080"/><rect x="6" y="6" width="1" height="1" fill="#006080"/><rect x="8" y="2" width="1" height="1" fill="#006080"/><rect x="8" y="4" width="1" height="1" fill="#006080"/><rect x="8" y="6" width="1" height="1" fill="#006080"/><rect x="10" y="2" width="1" height="1" fill="#006080"/><rect x="10" y="4" width="1" height="1" fill="#006080"/><rect x="10" y="6" width="1" height="1" fill="#006080"/></svg>
<div class="t" style="left:30px;top:275.54px;font-size:12px;line-height:12px;font-weight:normal;transform:scaleX(1.2);transform-origin:0 0;"><span style="color:#8000ff">&lt;ide-aux&gt;</span></div>
<svg class="r" style="left:12px;top:295px;shape-rendering:auto;" width="13" height="9" viewBox="0 0 13 9" shape-rendering="crispEdges"><rect x="0.5" y="0.5" width="12" height="8" rx="1.5" fill="#b8b0b0" stroke="#000"/><rect x="2" y="2" width="1" height="1" fill="#800000"/><rect x="2" y="4" width="1" height="1" fill="#800000"/><rect x="2" y="6" width="1" height="1" fill="#800000"/><rect x="4" y="2" width="1" height="1" fill="#800000"/><rect x="4" y="4" width="1" height="1" fill="#800000"/><rect x="4" y="6" width="1" height="1" fill="#800000"/><rect x="6" y="2" width="1" height="1" fill="#800000"/><rect x="6" y="4" width="1" height="1" fill="#800000"/><rect x="6" y="6" width="1" height="1" fill="#800000"/><rect x="8" y="2" width="1" height="1" fill="#800000"/><rect x="8" y="4" width="1" height="1" fill="#800000"/><rect x="8" y="6" width="1" height="1" fill="#800000"/><rect x="10" y="2" width="1" height="1" fill="#800000"/><rect x="10" y="4" width="1" height="1" fill="#800000"/><rect x="10" y="6" width="1" height="1" fill="#800000"/></svg>
<div class="t" style="left:30px;top:292.54px;font-size:12px;line-height:12px;font-weight:normal;transform:scaleX(1.2);transform-origin:0 0;"><span style="color:#8000ff">&lt;temp-a</span><span style="color:#a0a0a0">...</span></div>
<svg class="r" style="left:13px;top:310px;" width="12" height="12" viewBox="0 0 12 12" shape-rendering="crispEdges"><rect x="0.5" y="0.5" width="11" height="11" fill="#fff" stroke="#000"/><rect x="10" y="1" width="1" height="10" fill="#b0b0b0"/><rect x="1" y="10" width="10" height="1" fill="#b0b0b0"/><rect x="3" y="3" width="6" height="1" fill="#f00"/><rect x="3" y="5" width="6" height="1" fill="#f00"/><rect x="3" y="7" width="6" height="1" fill="#f00"/></svg>
<div class="t" style="left:30px;top:309.54px;font-size:12px;line-height:12px;font-weight:normal;transform:scaleX(1.25);transform-origin:0 0;"><span style="color:#800000">&lt;meta&gt;</span></div>
<svg class="r" style="left:64px;top:370px;" width="65" height="3" viewBox="0 0 65 3"><path d="M0 0 L2 2" stroke="#8f9396" stroke-width="0.9"/><path d="M4 0 L6 2" stroke="#8f9396" stroke-width="0.9"/><path d="M8 0 L10 2" stroke="#8f9396" stroke-width="0.9"/><path d="M12 0 L14 2" stroke="#8f9396" stroke-width="0.9"/><path d="M16 0 L18 2" stroke="#8f9396" stroke-width="0.9"/><path d="M20 0 L22 2" stroke="#8f9396" stroke-width="0.9"/><path d="M24 0 L26 2" stroke="#8f9396" stroke-width="0.9"/><path d="M28 0 L30 2" stroke="#8f9396" stroke-width="0.9"/><path d="M32 0 L34 2" stroke="#8f9396" stroke-width="0.9"/><path d="M36 0 L38 2" stroke="#8f9396" stroke-width="0.9"/><path d="M40 0 L42 2" stroke="#8f9396" stroke-width="0.9"/><path d="M44 0 L46 2" stroke="#8f9396" stroke-width="0.9"/><path d="M48 0 L50 2" stroke="#8f9396" stroke-width="0.9"/><path d="M52 0 L54 2" stroke="#8f9396" stroke-width="0.9"/><path d="M56 0 L58 2" stroke="#8f9396" stroke-width="0.9"/><path d="M60 0 L62 2" stroke="#8f9396" stroke-width="0.9"/></svg>
<div class="r" style="left:8px;top:374px;width:181px;height:1px;background:#9ea2a6;"></div>
<div class="r" style="left:8px;top:375px;width:180px;height:333px;background:#fcfcfc;"></div>
<div class="r" style="left:9px;top:393px;width:88px;height:17px;background:#dadcdf;"></div>
<div class="r" style="left:97px;top:376px;width:1px;height:34px;background:#b5b8bb;"></div>
<svg class="r" style="left:11px;top:376px;" width="18" height="15" viewBox="0 0 18 15"><g transform="translate(0,12.8) skewX(-10)"><text x="0.7" y="0" font-family="Liberation Serif" font-style="italic" font-weight="bold" font-size="15.5" fill="#800000">C</text></g><path d="M8.9 7.4 H11.9 M10.4 5.9 V8.9 M13.1 7.4 H16.1 M14.6 5.9 V8.9" stroke="#0000ff" stroke-width="1.05"/></svg>
<div class="t" style="left:30px;top:377.84px;font-size:12px;line-height:12px;font-weight:normal;font-family:'Liberation Sans';transform:scaleX(1.12);transform-origin:0 0;"><span style="color:#232629">main.</span><span style="color:#0000ff">cpp</span></div>
<svg class="r" style="left:12px;top:396px;" width="14" height="11" viewBox="0 0 14 11"><rect x="0" y="0" width="14" height="11" fill="#000"/><rect x="1" y="1" width="12" height="6" fill="#00ffff"/><rect x="1" y="7" width="12" height="3" fill="#00a000"/><path d="M1.5 7 V4.5 C1.5 2.5 5 2.5 5 4.5 V7 Z M6.5 7 V4.5 C6.5 3 8.5 3 8.5 4.5 V7 Z" fill="#000"/><ellipse cx="3.3" cy="5.2" rx="1.5" ry="2" fill="#00ff00"/><rect x="3" y="7" width="1" height="1.5" fill="#000"/><path d="M8.3 4.5 L10.8 1.3 L13 4.5 Z" fill="#c00000"/><rect x="8.8" y="4.5" width="3.8" height="4" fill="#c8b000"/><rect x="10.2" y="6" width="1.2" height="1.2" fill="#0000a0"/></svg>
<div class="t" style="left:30px;top:394.84px;font-size:12px;line-height:12px;font-weight:normal;font-family:'Liberation Sans';transform:scaleX(1.12);transform-origin:0 0;"><span style="color:#232629">images.</span><span style="color:#0000ff">iml</span></div>
<div class="r" style="left:29px;top:407px;width:65px;height:1px;background:#0000ff;"></div>
<svg class="r" style="left:190px;top:364px;" width="3" height="63" viewBox="0 0 3 63"><path d="M0 0 L2 2" stroke="#8f9396" stroke-width="0.9"/><path d="M0 4 L2 6" stroke="#8f9396" stroke-width="0.9"/><path d="M0 8 L2 10" stroke="#8f9396" stroke-width="0.9"/><path d="M0 12 L2 14" stroke="#8f9396" stroke-width="0.9"/><path d="M0 16 L2 18" stroke="#8f9396" stroke-width="0.9"/><path d="M0 20 L2 22" stroke="#8f9396" stroke-width="0.9"/><path d="M0 24 L2 26" stroke="#8f9396" stroke-width="0.9"/><path d="M0 28 L2 30" stroke="#8f9396" stroke-width="0.9"/><path d="M0 32 L2 34" stroke="#8f9396" stroke-width="0.9"/><path d="M0 36 L2 38" stroke="#8f9396" stroke-width="0.9"/><path d="M0 40 L2 42" stroke="#8f9396" stroke-width="0.9"/><path d="M0 44 L2 46" stroke="#8f9396" stroke-width="0.9"/><path d="M0 48 L2 50" stroke="#8f9396" stroke-width="0.9"/><path d="M0 52 L2 54" stroke="#8f9396" stroke-width="0.9"/><path d="M0 56 L2 58" stroke="#8f9396" stroke-width="0.9"/><path d="M0 60 L2 62" stroke="#8f9396" stroke-width="0.9"/></svg>
<div class="r" style="left:194px;top:115px;width:1px;height:594px;background:#a3a6a9;"></div>
<div class="r" style="left:196px;top:87px;width:107px;height:23px;background:#eff0f1;border-top:1px solid #fcfcfc;border-left:1px solid #fcfcfc;border-radius:3px 3px 0 0;"></div>
<div class="r" style="left:196px;top:109px;width:107px;height:1px;background:#9a9da0;"></div>
<svg class="r" style="left:201px;top:92px;" width="18" height="15" viewBox="0 0 18 15"><g transform="translate(0,12.8) skewX(-10)"><text x="0.7" y="0" font-family="Liberation Serif" font-style="italic" font-weight="bold" font-size="15.5" fill="#800000">C</text></g><path d="M8.9 7.4 H11.9 M10.4 5.9 V8.9 M13.1 7.4 H16.1 M14.6 5.9 V8.9" stroke="#0000ff" stroke-width="1.05"/></svg>
<div class="t" style="left:220px;top:91.00px;font-size:13px;line-height:13px;font-weight:normal;font-family:'Liberation Sans';transform:scaleX(1.06);transform-origin:0 0;"><span style="color:#232629">main.</span><span style="color:#0000ff">cpp</span></div>
<svg class="r" style="left:286px;top:93px;" width="14" height="14" viewBox="0 0 14 14"><rect x="0.5" y="0.5" width="13" height="13" rx="3" fill="#d4d4d4" stroke="#c0c0c0"/><path d="M4 4 L10 10 M10 4 L4 10" stroke="#f2f2f2" stroke-width="2.4"/></svg>
<div class="r" style="left:303px;top:85px;width:121px;height:26px;background:#eff0f1;border-top:1px solid #fcfcfc;border-left:1px solid #fcfcfc;border-radius:3px 3px 0 0;"></div>
<div class="r" style="left:423px;top:86px;width:1px;height:24px;background:#8a8d90;"></div>
<div class="r" style="left:424px;top:109px;width:842px;height:1px;background:#9a9da0;"></div>
<svg class="r" style="left:311px;top:93px;" width="14" height="11" viewBox="0 0 14 11"><rect x="0" y="0" width="14" height="11" fill="#000"/><rect x="1" y="1" width="12" height="6" fill="#00ffff"/><rect x="1" y="7" width="12" height="3" fill="#00a000"/><path d="M1.5 7 V4.5 C1.5 2.5 5 2.5 5 4.5 V7 Z M6.5 7 V4.5 C6.5 3 8.5 3 8.5 4.5 V7 Z" fill="#000"/><ellipse cx="3.3" cy="5.2" rx="1.5" ry="2" fill="#00ff00"/><rect x="3" y="7" width="1" height="1.5" fill="#000"/><path d="M8.3 4.5 L10.8 1.3 L13 4.5 Z" fill="#c00000"/><rect x="8.8" y="4.5" width="3.8" height="4" fill="#c8b000"/><rect x="10.2" y="6" width="1.2" height="1.2" fill="#0000a0"/></svg>
<div class="t" style="left:329px;top:89.00px;font-size:13px;line-height:13px;font-weight:normal;font-family:'Liberation Sans';transform:scaleX(1.055);transform-origin:0 0;"><span style="color:#232629">images.</span><span style="color:#0000ff">iml</span></div>
<svg class="r" style="left:404px;top:91px;" width="14" height="14" viewBox="0 0 14 14"><rect x="0.5" y="0.5" width="13" height="13" rx="3" fill="#e24a5a" stroke="#c83040"/><rect x="1" y="1" width="12" height="5" rx="2" fill="#ef8a95"/><path d="M4 4 L10 10 M10 4 L4 10" stroke="#f6f6f6" stroke-width="2.4"/></svg>
<div class="r" style="left:194px;top:111px;width:1072px;height:2px;background:#000080;"></div>
<div class="r" style="left:194px;top:113px;width:1072px;height:1px;background:#fcfcfc;"></div>
<div class="r" style="left:194px;top:110px;width:1072px;height:1px;background:#fcfcfc;"></div>
<div class="r" style="left:194px;top:115px;width:1072px;height:1px;background:#a4a7aa;"></div>
<div class="r" style="left:194px;top:109px;width:2px;height:1px;background:#9a9da0;"></div>
<div class="r" style="left:196px;top:115px;width:282px;height:20px;background:#fcfcfc;border-top:1px solid #a4a7aa;border-left:1px solid #a4a7aa;border-right:1px solid #b4b7ba;"></div>
<div class="t" style="left:200px;top:118.82px;font-size:12.5px;line-height:12.5px;color:#b8bbbe;font-weight:normal;font-family:'Liberation Sans';font-style:italic;transform:scaleX(1.1);transform-origin:0 0;">Search (Ctrl+F)</div>
<div class="r" style="left:196px;top:134px;width:281px;height:52px;background:#fcfcfc;border-top:2px solid #a4a7aa;border-left:1px solid #a4a7aa;border-right:1px solid #e8e8e8;border-bottom:1px solid #eff0f1;"></div>
<div class="r" style="left:198px;top:137px;width:262px;height:14px;background:#dadcdf;"></div>
<div class="r" style="left:198px;top:151px;width:262px;height:1px;background:#a8abae;"></div>
<div class="t" style="left:204px;top:137.87px;font-size:11.5px;line-height:11.5px;color:#232629;font-weight:normal;font-family:'Liberation Sans';font-style:normal;transform:scaleX(1.17);transform-origin:0 0;">MyImage (16 x 16)</div>
<svg class="r" style="left:428px;top:138px;shape-rendering:auto;" width="12" height="12" viewBox="0 0 12 12" shape-rendering="crispEdges"><rect x="0" y="0" width="12" height="12" fill="#000"/><defs><linearGradient id="mi" x1="0" y1="0" x2="1" y2="1"><stop offset="0.35" stop-color="#f00"/><stop offset="0.65" stop-color="#000080"/></linearGradient></defs><rect x="1" y="1" width="10" height="10" fill="url(#mi)"/></svg>
<div class="r" style="left:460px;top:137px;width:16px;height:48px;background:#f4f4ee;border:1px solid #c4c7ca;"></div>
<div class="r" style="left:461px;top:152px;width:14px;height:18px;background:linear-gradient(90deg,#e8e4d0,#fcfcf8);"></div>
<div class="r" style="left:461px;top:151px;width:14px;height:1px;background:#c4c7ca;"></div>
<div class="r" style="left:461px;top:170px;width:14px;height:1px;background:#c4c7ca;"></div>
<div class="r" style="left:461px;top:138px;width:14px;height:13px;background:#f0f1f2;"></div>
<div class="r" style="left:461px;top:171px;width:14px;height:13px;background:#f0f1f2;"></div>
<svg class="r" style="left:463px;top:141px;shape-rendering:auto;" width="10" height="5" viewBox="0 0 10 5" shape-rendering="crispEdges"><path d="M0 5 L5 0 L10 5 Z" fill="#8c8f92"/></svg>
<svg class="r" style="left:463px;top:175px;shape-rendering:auto;" width="10" height="5" viewBox="0 0 10 5" shape-rendering="crispEdges"><path d="M0 0 L5 5 L10 0 Z" fill="#8c8f92"/></svg>
<div class="r" style="left:201px;top:190px;width:273px;height:213px;background:#fcfcfc;"></div>
<div class="r" style="left:202px;top:191px;width:271px;height:211px;background:#353a3f;"></div>
<div class="r" style="left:203px;top:192px;width:14px;height:14px;background:#000000"></div>
<div class="r" style="left:203px;top:207px;width:14px;height:14px;background:rgb(12,12,12)"></div>
<div class="r" style="left:218px;top:192px;width:14px;height:14px;background:#800000"></div>
<div class="r" style="left:218px;top:207px;width:14px;height:14px;background:rgb(25,25,25)"></div>
<div class="r" style="left:233px;top:192px;width:14px;height:14px;background:#008000"></div>
<div class="r" style="left:233px;top:207px;width:14px;height:14px;background:rgb(38,38,38)"></div>
<div class="r" style="left:248px;top:192px;width:14px;height:14px;background:#808000"></div>
<div class="r" style="left:248px;top:207px;width:14px;height:14px;background:rgb(51,51,51)"></div>
<div class="r" style="left:263px;top:192px;width:14px;height:14px;background:#000080"></div>
<div class="r" style="left:263px;top:207px;width:14px;height:14px;background:rgb(63,63,63)"></div>
<div class="r" style="left:278px;top:192px;width:14px;height:14px;background:#8000ff"></div>
<div class="r" style="left:278px;top:207px;width:14px;height:14px;background:rgb(76,76,76)"></div>
<div class="r" style="left:293px;top:192px;width:14px;height:14px;background:#008080"></div>
<div class="r" style="left:293px;top:207px;width:14px;height:14px;background:rgb(89,89,89)"></div>
<div class="r" style="left:308px;top:192px;width:14px;height:14px;background:#808080"></div>
<div class="r" style="left:308px;top:207px;width:14px;height:14px;background:rgb(102,102,102)"></div>
<div class="r" style="left:323px;top:192px;width:14px;height:14px;background:#c0c0c0"></div>
<div class="r" style="left:323px;top:207px;width:14px;height:14px;background:rgb(114,114,114)"></div>
<div class="r" style="left:338px;top:192px;width:14px;height:14px;background:#ff0000"></div>
<div class="r" style="left:338px;top:207px;width:14px;height:14px;background:rgb(127,127,127)"></div>
<div class="r" style="left:353px;top:192px;width:14px;height:14px;background:#00ff00"></div>
<div class="r" style="left:353px;top:207px;width:14px;height:14px;background:rgb(140,140,140)"></div>
<div class="r" style="left:368px;top:192px;width:14px;height:14px;background:#ffffc0"></div>
<div class="r" style="left:368px;top:207px;width:14px;height:14px;background:rgb(153,153,153)"></div>
<div class="r" style="left:383px;top:192px;width:14px;height:14px;background:#0000ff"></div>
<div class="r" style="left:383px;top:207px;width:14px;height:14px;background:rgb(165,165,165)"></div>
<div class="r" style="left:398px;top:192px;width:14px;height:14px;background:#ff00ff"></div>
<div class="r" style="left:398px;top:207px;width:14px;height:14px;background:rgb(178,178,178)"></div>
<div class="r" style="left:413px;top:192px;width:14px;height:14px;background:#00ffff"></div>
<div class="r" style="left:413px;top:207px;width:14px;height:14px;background:rgb(191,191,191)"></div>
<div class="r" style="left:428px;top:192px;width:14px;height:14px;background:#ffff00"></div>
<div class="r" style="left:428px;top:207px;width:14px;height:14px;background:rgb(204,204,204)"></div>
<div class="r" style="left:443px;top:192px;width:14px;height:14px;background:#e0e0e0"></div>
<div class="r" style="left:443px;top:207px;width:14px;height:14px;background:rgb(216,216,216)"></div>
<div class="r" style="left:458px;top:192px;width:14px;height:14px;background:#ffffff"></div>
<div class="r" style="left:458px;top:207px;width:14px;height:14px;background:rgb(229,229,229)"></div>
<div class="r" style="left:203px;top:222px;width:14px;height:14px;background:rgb(28,42,0)"></div>
<div class="r" style="left:203px;top:312px;width:14px;height:14px;background:rgb(28,255,200)"></div>
<div class="r" style="left:218px;top:222px;width:14px;height:14px;background:rgb(56,42,0)"></div>
<div class="r" style="left:218px;top:312px;width:14px;height:14px;background:rgb(56,255,200)"></div>
<div class="r" style="left:233px;top:222px;width:14px;height:14px;background:rgb(85,42,0)"></div>
<div class="r" style="left:233px;top:312px;width:14px;height:14px;background:rgb(85,255,200)"></div>
<div class="r" style="left:248px;top:222px;width:14px;height:14px;background:rgb(113,42,0)"></div>
<div class="r" style="left:248px;top:312px;width:14px;height:14px;background:rgb(113,255,200)"></div>
<div class="r" style="left:263px;top:222px;width:14px;height:14px;background:rgb(141,42,0)"></div>
<div class="r" style="left:263px;top:312px;width:14px;height:14px;background:rgb(141,255,200)"></div>
<div class="r" style="left:278px;top:222px;width:14px;height:14px;background:rgb(170,42,0)"></div>
<div class="r" style="left:278px;top:312px;width:14px;height:14px;background:rgb(170,255,200)"></div>
<div class="r" style="left:293px;top:222px;width:14px;height:14px;background:rgb(198,42,0)"></div>
<div class="r" style="left:293px;top:312px;width:14px;height:14px;background:rgb(198,255,200)"></div>
<div class="r" style="left:308px;top:222px;width:14px;height:14px;background:rgb(226,42,0)"></div>
<div class="r" style="left:308px;top:312px;width:14px;height:14px;background:rgb(226,255,200)"></div>
<div class="r" style="left:323px;top:222px;width:14px;height:14px;background:rgb(255,42,0)"></div>
<div class="r" style="left:323px;top:312px;width:14px;height:14px;background:rgb(255,255,200)"></div>
<div class="r" style="left:338px;top:222px;width:14px;height:14px;background:rgb(255,42,150)"></div>
<div class="r" style="left:338px;top:312px;width:14px;height:14px;background:rgb(255,255,255)"></div>
<div class="r" style="left:353px;top:222px;width:14px;height:14px;background:rgb(226,42,150)"></div>
<div class="r" style="left:353px;top:312px;width:14px;height:14px;background:rgb(226,255,255)"></div>
<div class="r" style="left:368px;top:222px;width:14px;height:14px;background:rgb(198,42,150)"></div>
<div class="r" style="left:368px;top:312px;width:14px;height:14px;background:rgb(198,255,255)"></div>
<div class="r" style="left:383px;top:222px;width:14px;height:14px;background:rgb(170,42,150)"></div>
<div class="r" style="left:383px;top:312px;width:14px;height:14px;background:rgb(170,255,255)"></div>
<div class="r" style="left:398px;top:222px;width:14px;height:14px;background:rgb(141,42,150)"></div>
<div class="r" style="left:398px;top:312px;width:14px;height:14px;background:rgb(141,255,255)"></div>
<div class="r" style="left:413px;top:222px;width:14px;height:14px;background:rgb(113,42,150)"></div>
<div class="r" style="left:413px;top:312px;width:14px;height:14px;background:rgb(113,255,255)"></div>
<div class="r" style="left:428px;top:222px;width:14px;height:14px;background:rgb(85,42,150)"></div>
<div class="r" style="left:428px;top:312px;width:14px;height:14px;background:rgb(85,255,255)"></div>
<div class="r" style="left:443px;top:222px;width:14px;height:14px;background:rgb(56,42,150)"></div>
<div class="r" style="left:443px;top:312px;width:14px;height:14px;background:rgb(56,255,255)"></div>
<div class="r" style="left:458px;top:222px;width:14px;height:14px;background:rgb(28,42,150)"></div>
<div class="r" style="left:458px;top:312px;width:14px;height:14px;background:rgb(28,255,255)"></div>
<div class="r" style="left:203px;top:237px;width:14px;height:14px;background:rgb(28,85,0)"></div>
<div class="r" style="left:203px;top:327px;width:14px;height:14px;background:rgb(28,212,200)"></div>
<div class="r" style="left:218px;top:237px;width:14px;height:14px;background:rgb(56,85,0)"></div>
<div class="r" style="left:218px;top:327px;width:14px;height:14px;background:rgb(56,212,200)"></div>
<div class="r" style="left:233px;top:237px;width:14px;height:14px;background:rgb(85,85,0)"></div>
<div class="r" style="left:233px;top:327px;width:14px;height:14px;background:rgb(85,212,200)"></div>
<div class="r" style="left:248px;top:237px;width:14px;height:14px;background:rgb(113,85,0)"></div>
<div class="r" style="left:248px;top:327px;width:14px;height:14px;background:rgb(113,212,200)"></div>
<div class="r" style="left:263px;top:237px;width:14px;height:14px;background:rgb(141,85,0)"></div>
<div class="r" style="left:263px;top:327px;width:14px;height:14px;background:rgb(141,212,200)"></div>
<div class="r" style="left:278px;top:237px;width:14px;height:14px;background:rgb(170,85,0)"></div>
<div class="r" style="left:278px;top:327px;width:14px;height:14px;background:rgb(170,212,200)"></div>
<div class="r" style="left:293px;top:237px;width:14px;height:14px;background:rgb(198,85,0)"></div>
<div class="r" style="left:293px;top:327px;width:14px;height:14px;background:rgb(198,212,200)"></div>
<div class="r" style="left:308px;top:237px;width:14px;height:14px;background:rgb(226,85,0)"></div>
<div class="r" style="left:308px;top:327px;width:14px;height:14px;background:rgb(226,212,200)"></div>
<div class="r" style="left:323px;top:237px;width:14px;height:14px;background:rgb(255,85,0)"></div>
<div class="r" style="left:323px;top:327px;width:14px;height:14px;background:rgb(255,212,200)"></div>
<div class="r" style="left:338px;top:237px;width:14px;height:14px;background:rgb(255,85,150)"></div>
<div class="r" style="left:338px;top:327px;width:14px;height:14px;background:rgb(255,212,255)"></div>
<div class="r" style="left:353px;top:237px;width:14px;height:14px;background:rgb(226,85,150)"></div>
<div class="r" style="left:353px;top:327px;width:14px;height:14px;background:rgb(226,212,255)"></div>
<div class="r" style="left:368px;top:237px;width:14px;height:14px;background:rgb(198,85,150)"></div>
<div class="r" style="left:368px;top:327px;width:14px;height:14px;background:rgb(198,212,255)"></div>
<div class="r" style="left:383px;top:237px;width:14px;height:14px;background:rgb(170,85,150)"></div>
<div class="r" style="left:383px;top:327px;width:14px;height:14px;background:rgb(170,212,255)"></div>
<div class="r" style="left:398px;top:237px;width:14px;height:14px;background:rgb(141,85,150)"></div>
<div class="r" style="left:398px;top:327px;width:14px;height:14px;background:rgb(141,212,255)"></div>
<div class="r" style="left:413px;top:237px;width:14px;height:14px;background:rgb(113,85,150)"></div>
<div class="r" style="left:413px;top:327px;width:14px;height:14px;background:rgb(113,212,255)"></div>
<div class="r" style="left:428px;top:237px;width:14px;height:14px;background:rgb(85,85,150)"></div>
<div class="r" style="left:428px;top:327px;width:14px;height:14px;background:rgb(85,212,255)"></div>
<div class="r" style="left:443px;top:237px;width:14px;height:14px;background:rgb(56,85,150)"></div>
<div class="r" style="left:443px;top:327px;width:14px;height:14px;background:rgb(56,212,255)"></div>
<div class="r" style="left:458px;top:237px;width:14px;height:14px;background:rgb(28,85,150)"></div>
<div class="r" style="left:458px;top:327px;width:14px;height:14px;background:rgb(28,212,255)"></div>
<div class="r" style="left:203px;top:252px;width:14px;height:14px;background:rgb(28,127,0)"></div>
<div class="r" style="left:203px;top:342px;width:14px;height:14px;background:rgb(28,170,200)"></div>
<div class="r" style="left:218px;top:252px;width:14px;height:14px;background:rgb(56,127,0)"></div>
<div class="r" style="left:218px;top:342px;width:14px;height:14px;background:rgb(56,170,200)"></div>
<div class="r" style="left:233px;top:252px;width:14px;height:14px;background:rgb(85,127,0)"></div>
<div class="r" style="left:233px;top:342px;width:14px;height:14px;background:rgb(85,170,200)"></div>
<div class="r" style="left:248px;top:252px;width:14px;height:14px;background:rgb(113,127,0)"></div>
<div class="r" style="left:248px;top:342px;width:14px;height:14px;background:rgb(113,170,200)"></div>
<div class="r" style="left:263px;top:252px;width:14px;height:14px;background:rgb(141,127,0)"></div>
<div class="r" style="left:263px;top:342px;width:14px;height:14px;background:rgb(141,170,200)"></div>
<div class="r" style="left:278px;top:252px;width:14px;height:14px;background:rgb(170,127,0)"></div>
<div class="r" style="left:278px;top:342px;width:14px;height:14px;background:rgb(170,170,200)"></div>
<div class="r" style="left:293px;top:252px;width:14px;height:14px;background:rgb(198,127,0)"></div>
<div class="r" style="left:293px;top:342px;width:14px;height:14px;background:rgb(198,170,200)"></div>
<div class="r" style="left:308px;top:252px;width:14px;height:14px;background:rgb(226,127,0)"></div>
<div class="r" style="left:308px;top:342px;width:14px;height:14px;background:rgb(226,170,200)"></div>
<div class="r" style="left:323px;top:252px;width:14px;height:14px;background:rgb(255,127,0)"></div>
<div class="r" style="left:323px;top:342px;width:14px;height:14px;background:rgb(255,170,200)"></div>
<div class="r" style="left:338px;top:252px;width:14px;height:14px;background:rgb(255,127,150)"></div>
<div class="r" style="left:338px;top:342px;width:14px;height:14px;background:rgb(255,170,255)"></div>
<div class="r" style="left:353px;top:252px;width:14px;height:14px;background:rgb(226,127,150)"></div>
<div class="r" style="left:353px;top:342px;width:14px;height:14px;background:rgb(226,170,255)"></div>
<div class="r" style="left:368px;top:252px;width:14px;height:14px;background:rgb(198,127,150)"></div>
<div class="r" style="left:368px;top:342px;width:14px;height:14px;background:rgb(198,170,255)"></div>
<div class="r" style="left:383px;top:252px;width:14px;height:14px;background:rgb(170,127,150)"></div>
<div class="r" style="left:383px;top:342px;width:14px;height:14px;background:rgb(170,170,255)"></div>
<div class="r" style="left:398px;top:252px;width:14px;height:14px;background:rgb(141,127,150)"></div>
<div class="r" style="left:398px;top:342px;width:14px;height:14px;background:rgb(141,170,255)"></div>
<div class="r" style="left:413px;top:252px;width:14px;height:14px;background:rgb(113,127,150)"></div>
<div class="r" style="left:413px;top:342px;width:14px;height:14px;background:rgb(113,170,255)"></div>
<div class="r" style="left:428px;top:252px;width:14px;height:14px;background:rgb(85,127,150)"></div>
<div class="r" style="left:428px;top:342px;width:14px;height:14px;background:rgb(85,170,255)"></div>
<div class="r" style="left:443px;top:252px;width:14px;height:14px;background:rgb(56,127,150)"></div>
<div class="r" style="left:443px;top:342px;width:14px;height:14px;background:rgb(56,170,255)"></div>
<div class="r" style="left:458px;top:252px;width:14px;height:14px;background:rgb(28,127,150)"></div>
<div class="r" style="left:458px;top:342px;width:14px;height:14px;background:rgb(28,170,255)"></div>
<div class="r" style="left:203px;top:267px;width:14px;height:14px;background:rgb(28,170,0)"></div>
<div class="r" style="left:203px;top:357px;width:14px;height:14px;background:rgb(28,127,200)"></div>
<div class="r" style="left:218px;top:267px;width:14px;height:14px;background:rgb(56,170,0)"></div>
<div class="r" style="left:218px;top:357px;width:14px;height:14px;background:rgb(56,127,200)"></div>
<div class="r" style="left:233px;top:267px;width:14px;height:14px;background:rgb(85,170,0)"></div>
<div class="r" style="left:233px;top:357px;width:14px;height:14px;background:rgb(85,127,200)"></div>
<div class="r" style="left:248px;top:267px;width:14px;height:14px;background:rgb(113,170,0)"></div>
<div class="r" style="left:248px;top:357px;width:14px;height:14px;background:rgb(113,127,200)"></div>
<div class="r" style="left:263px;top:267px;width:14px;height:14px;background:rgb(141,170,0)"></div>
<div class="r" style="left:263px;top:357px;width:14px;height:14px;background:rgb(141,127,200)"></div>
<div class="r" style="left:278px;top:267px;width:14px;height:14px;background:rgb(170,170,0)"></div>
<div class="r" style="left:278px;top:357px;width:14px;height:14px;background:rgb(170,127,200)"></div>
<div class="r" style="left:293px;top:267px;width:14px;height:14px;background:rgb(198,170,0)"></div>
<div class="r" style="left:293px;top:357px;width:14px;height:14px;background:rgb(198,127,200)"></div>
<div class="r" style="left:308px;top:267px;width:14px;height:14px;background:rgb(226,170,0)"></div>
<div class="r" style="left:308px;top:357px;width:14px;height:14px;background:rgb(226,127,200)"></div>
<div class="r" style="left:323px;top:267px;width:14px;height:14px;background:rgb(255,170,0)"></div>
<div class="r" style="left:323px;top:357px;width:14px;height:14px;background:rgb(255,127,200)"></div>
<div class="r" style="left:338px;top:267px;width:14px;height:14px;background:rgb(255,170,150)"></div>
<div class="r" style="left:338px;top:357px;width:14px;height:14px;background:rgb(255,127,255)"></div>
<div class="r" style="left:353px;top:267px;width:14px;height:14px;background:rgb(226,170,150)"></div>
<div class="r" style="left:353px;top:357px;width:14px;height:14px;background:rgb(226,127,255)"></div>
<div class="r" style="left:368px;top:267px;width:14px;height:14px;background:rgb(198,170,150)"></div>
<div class="r" style="left:368px;top:357px;width:14px;height:14px;background:rgb(198,127,255)"></div>
<div class="r" style="left:383px;top:267px;width:14px;height:14px;background:rgb(170,170,150)"></div>
<div class="r" style="left:383px;top:357px;width:14px;height:14px;background:rgb(170,127,255)"></div>
<div class="r" style="left:398px;top:267px;width:14px;height:14px;background:rgb(141,170,150)"></div>
<div class="r" style="left:398px;top:357px;width:14px;height:14px;background:rgb(141,127,255)"></div>
<div class="r" style="left:413px;top:267px;width:14px;height:14px;background:rgb(113,170,150)"></div>
<div class="r" style="left:413px;top:357px;width:14px;height:14px;background:rgb(113,127,255)"></div>
<div class="r" style="left:428px;top:267px;width:14px;height:14px;background:rgb(85,170,150)"></div>
<div class="r" style="left:428px;top:357px;width:14px;height:14px;background:rgb(85,127,255)"></div>
<div class="r" style="left:443px;top:267px;width:14px;height:14px;background:rgb(56,170,150)"></div>
<div class="r" style="left:443px;top:357px;width:14px;height:14px;background:rgb(56,127,255)"></div>
<div class="r" style="left:458px;top:267px;width:14px;height:14px;background:rgb(28,170,150)"></div>
<div class="r" style="left:458px;top:357px;width:14px;height:14px;background:rgb(28,127,255)"></div>
<div class="r" style="left:203px;top:282px;width:14px;height:14px;background:rgb(28,212,0)"></div>
<div class="r" style="left:203px;top:372px;width:14px;height:14px;background:rgb(28,85,200)"></div>
<div class="r" style="left:218px;top:282px;width:14px;height:14px;background:rgb(56,212,0)"></div>
<div class="r" style="left:218px;top:372px;width:14px;height:14px;background:rgb(56,85,200)"></div>
<div class="r" style="left:233px;top:282px;width:14px;height:14px;background:rgb(85,212,0)"></div>
<div class="r" style="left:233px;top:372px;width:14px;height:14px;background:rgb(85,85,200)"></div>
<div class="r" style="left:248px;top:282px;width:14px;height:14px;background:rgb(113,212,0)"></div>
<div class="r" style="left:248px;top:372px;width:14px;height:14px;background:rgb(113,85,200)"></div>
<div class="r" style="left:263px;top:282px;width:14px;height:14px;background:rgb(141,212,0)"></div>
<div class="r" style="left:263px;top:372px;width:14px;height:14px;background:rgb(141,85,200)"></div>
<div class="r" style="left:278px;top:282px;width:14px;height:14px;background:rgb(170,212,0)"></div>
<div class="r" style="left:278px;top:372px;width:14px;height:14px;background:rgb(170,85,200)"></div>
<div class="r" style="left:293px;top:282px;width:14px;height:14px;background:rgb(198,212,0)"></div>
<div class="r" style="left:293px;top:372px;width:14px;height:14px;background:rgb(198,85,200)"></div>
<div class="r" style="left:308px;top:282px;width:14px;height:14px;background:rgb(226,212,0)"></div>
<div class="r" style="left:308px;top:372px;width:14px;height:14px;background:rgb(226,85,200)"></div>
<div class="r" style="left:323px;top:282px;width:14px;height:14px;background:rgb(255,212,0)"></div>
<div class="r" style="left:323px;top:372px;width:14px;height:14px;background:rgb(255,85,200)"></div>
<div class="r" style="left:338px;top:282px;width:14px;height:14px;background:rgb(255,212,150)"></div>
<div class="r" style="left:338px;top:372px;width:14px;height:14px;background:rgb(255,85,255)"></div>
<div class="r" style="left:353px;top:282px;width:14px;height:14px;background:rgb(226,212,150)"></div>
<div class="r" style="left:353px;top:372px;width:14px;height:14px;background:rgb(226,85,255)"></div>
<div class="r" style="left:368px;top:282px;width:14px;height:14px;background:rgb(198,212,150)"></div>
<div class="r" style="left:368px;top:372px;width:14px;height:14px;background:rgb(198,85,255)"></div>
<div class="r" style="left:383px;top:282px;width:14px;height:14px;background:rgb(170,212,150)"></div>
<div class="r" style="left:383px;top:372px;width:14px;height:14px;background:rgb(170,85,255)"></div>
<div class="r" style="left:398px;top:282px;width:14px;height:14px;background:rgb(141,212,150)"></div>
<div class="r" style="left:398px;top:372px;width:14px;height:14px;background:rgb(141,85,255)"></div>
<div class="r" style="left:413px;top:282px;width:14px;height:14px;background:rgb(113,212,150)"></div>
<div class="r" style="left:413px;top:372px;width:14px;height:14px;background:rgb(113,85,255)"></div>
<div class="r" style="left:428px;top:282px;width:14px;height:14px;background:rgb(85,212,150)"></div>
<div class="r" style="left:428px;top:372px;width:14px;height:14px;background:rgb(85,85,255)"></div>
<div class="r" style="left:443px;top:282px;width:14px;height:14px;background:rgb(56,212,150)"></div>
<div class="r" style="left:443px;top:372px;width:14px;height:14px;background:rgb(56,85,255)"></div>
<div class="r" style="left:458px;top:282px;width:14px;height:14px;background:rgb(28,212,150)"></div>
<div class="r" style="left:458px;top:372px;width:14px;height:14px;background:rgb(28,85,255)"></div>
<div class="r" style="left:203px;top:297px;width:14px;height:14px;background:rgb(28,255,0)"></div>
<div class="r" style="left:203px;top:387px;width:14px;height:14px;background:rgb(28,42,200)"></div>
<div class="r" style="left:218px;top:297px;width:14px;height:14px;background:rgb(56,255,0)"></div>
<div class="r" style="left:218px;top:387px;width:14px;height:14px;background:rgb(56,42,200)"></div>
<div class="r" style="left:233px;top:297px;width:14px;height:14px;background:rgb(85,255,0)"></div>
<div class="r" style="left:233px;top:387px;width:14px;height:14px;background:rgb(85,42,200)"></div>
<div class="r" style="left:248px;top:297px;width:14px;height:14px;background:rgb(113,255,0)"></div>
<div class="r" style="left:248px;top:387px;width:14px;height:14px;background:rgb(113,42,200)"></div>
<div class="r" style="left:263px;top:297px;width:14px;height:14px;background:rgb(141,255,0)"></div>
<div class="r" style="left:263px;top:387px;width:14px;height:14px;background:rgb(141,42,200)"></div>
<div class="r" style="left:278px;top:297px;width:14px;height:14px;background:rgb(170,255,0)"></div>
<div class="r" style="left:278px;top:387px;width:14px;height:14px;background:rgb(170,42,200)"></div>
<div class="r" style="left:293px;top:297px;width:14px;height:14px;background:rgb(198,255,0)"></div>
<div class="r" style="left:293px;top:387px;width:14px;height:14px;background:rgb(198,42,200)"></div>
<div class="r" style="left:308px;top:297px;width:14px;height:14px;background:rgb(226,255,0)"></div>
<div class="r" style="left:308px;top:387px;width:14px;height:14px;background:rgb(226,42,200)"></div>
<div class="r" style="left:323px;top:297px;width:14px;height:14px;background:rgb(255,255,0)"></div>
<div class="r" style="left:323px;top:387px;width:14px;height:14px;background:rgb(255,42,200)"></div>
<div class="r" style="left:338px;top:297px;width:14px;height:14px;background:rgb(255,255,150)"></div>
<div class="r" style="left:338px;top:387px;width:14px;height:14px;background:rgb(255,42,255)"></div>
<div class="r" style="left:353px;top:297px;width:14px;height:14px;background:rgb(226,255,150)"></div>
<div class="r" style="left:353px;top:387px;width:14px;height:14px;background:rgb(226,42,255)"></div>
<div class="r" style="left:368px;top:297px;width:14px;height:14px;background:rgb(198,255,150)"></div>
<div class="r" style="left:368px;top:387px;width:14px;height:14px;background:rgb(198,42,255)"></div>
<div class="r" style="left:383px;top:297px;width:14px;height:14px;background:rgb(170,255,150)"></div>
<div class="r" style="left:383px;top:387px;width:14px;height:14px;background:rgb(170,42,255)"></div>
<div class="r" style="left:398px;top:297px;width:14px;height:14px;background:rgb(141,255,150)"></div>
<div class="r" style="left:398px;top:387px;width:14px;height:14px;background:rgb(141,42,255)"></div>
<div class="r" style="left:413px;top:297px;width:14px;height:14px;background:rgb(113,255,150)"></div>
<div class="r" style="left:413px;top:387px;width:14px;height:14px;background:rgb(113,42,255)"></div>
<div class="r" style="left:428px;top:297px;width:14px;height:14px;background:rgb(85,255,150)"></div>
<div class="r" style="left:428px;top:387px;width:14px;height:14px;background:rgb(85,42,255)"></div>
<div class="r" style="left:443px;top:297px;width:14px;height:14px;background:rgb(56,255,150)"></div>
<div class="r" style="left:443px;top:387px;width:14px;height:14px;background:rgb(56,42,255)"></div>
<div class="r" style="left:458px;top:297px;width:14px;height:14px;background:rgb(28,255,150)"></div>
<div class="r" style="left:458px;top:387px;width:14px;height:14px;background:rgb(28,42,255)"></div>
<svg class="r" style="left:203px;top:192px;shape-rendering:auto;" width="14" height="14" viewBox="0 0 14 14" shape-rendering="crispEdges"><path d="M5.5 2.5 H8.5 V5.5 H11.5 V8.5 H8.5 V11.5 H5.5 V8.5 H2.5 V5.5 H5.5 Z" fill="#000" stroke="#fff" stroke-width="1.2"/></svg>
<div class="r" style="left:196px;top:405px;width:282px;height:20px;background:#eff0f1;border:1px solid #b4b7ba;border-radius:2px;"></div>
<div class="t" style="left:200px;top:409.04px;font-size:12px;line-height:12px;color:#31363b;font-weight:normal;font-family:'Liberation Mono';font-style:normal;transform:scaleX(0.922);transform-origin:0 0;">RGBA(   0,   0,   0, 255)</div>
<svg class="r" style="left:466px;top:428px;" width="10" height="7" viewBox="0 0 10 7"><path d="M0.5 0.5 H9.5 L5 6.5 Z" fill="#00e8f0" stroke="#0a3a40" stroke-width="0.8"/></svg>
<div class="r" style="left:196px;top:436px;width:282px;height:20px;background:#000;"></div>
<div class="r" style="left:197px;top:446px;width:7px;height:9px;background:rgb(254,254,254)"></div>
<div class="r" style="left:204px;top:437px;width:8px;height:9px;background:rgb(246,246,246)"></div>
<div class="r" style="left:212px;top:446px;width:8px;height:9px;background:rgb(238,238,238)"></div>
<div class="r" style="left:220px;top:437px;width:8px;height:9px;background:rgb(229,229,229)"></div>
<div class="r" style="left:228px;top:446px;width:8px;height:9px;background:rgb(220,220,220)"></div>
<div class="r" style="left:236px;top:437px;width:8px;height:9px;background:rgb(212,212,212)"></div>
<div class="r" style="left:244px;top:446px;width:8px;height:9px;background:rgb(203,203,203)"></div>
<div class="r" style="left:252px;top:437px;width:8px;height:9px;background:rgb(194,194,194)"></div>
<div class="r" style="left:260px;top:446px;width:8px;height:9px;background:rgb(186,186,186)"></div>
<div class="r" style="left:268px;top:437px;width:8px;height:9px;background:rgb(177,177,177)"></div>
<div class="r" style="left:276px;top:446px;width:8px;height:9px;background:rgb(168,168,168)"></div>
<div class="r" style="left:284px;top:437px;width:8px;height:9px;background:rgb(160,160,160)"></div>
<div class="r" style="left:292px;top:446px;width:8px;height:9px;background:rgb(151,151,151)"></div>
<div class="r" style="left:300px;top:437px;width:8px;height:9px;background:rgb(142,142,142)"></div>
<div class="r" style="left:308px;top:446px;width:8px;height:9px;background:rgb(133,133,133)"></div>
<div class="r" style="left:316px;top:437px;width:8px;height:9px;background:rgb(125,125,125)"></div>
<div class="r" style="left:324px;top:446px;width:8px;height:9px;background:rgb(116,116,116)"></div>
<div class="r" style="left:332px;top:437px;width:8px;height:9px;background:rgb(107,107,107)"></div>
<div class="r" style="left:340px;top:446px;width:8px;height:9px;background:rgb(99,99,99)"></div>
<div class="r" style="left:348px;top:437px;width:8px;height:9px;background:rgb(90,90,90)"></div>
<div class="r" style="left:356px;top:446px;width:8px;height:9px;background:rgb(81,81,81)"></div>
<div class="r" style="left:364px;top:437px;width:8px;height:9px;background:rgb(73,73,73)"></div>
<div class="r" style="left:372px;top:446px;width:8px;height:9px;background:rgb(64,64,64)"></div>
<div class="r" style="left:380px;top:437px;width:8px;height:9px;background:rgb(55,55,55)"></div>
<div class="r" style="left:388px;top:446px;width:8px;height:9px;background:rgb(47,47,47)"></div>
<div class="r" style="left:396px;top:437px;width:8px;height:9px;background:rgb(38,38,38)"></div>
<div class="r" style="left:404px;top:446px;width:8px;height:9px;background:rgb(29,29,29)"></div>
<div class="r" style="left:412px;top:437px;width:8px;height:9px;background:rgb(21,21,21)"></div>
<div class="r" style="left:420px;top:446px;width:8px;height:9px;background:rgb(12,12,12)"></div>
<div class="r" style="left:428px;top:437px;width:8px;height:9px;background:rgb(3,3,3)"></div>
<div class="r" style="left:436px;top:446px;width:8px;height:9px;background:rgb(0,0,0)"></div>
<div class="r" style="left:444px;top:437px;width:8px;height:9px;background:rgb(0,0,0)"></div>
<div class="r" style="left:452px;top:446px;width:8px;height:9px;background:rgb(0,0,0)"></div>
<div class="r" style="left:460px;top:437px;width:8px;height:9px;background:rgb(0,0,0)"></div>
<div class="r" style="left:468px;top:446px;width:8px;height:9px;background:rgb(0,0,0)"></div>
<div class="r" style="left:476px;top:437px;width:1px;height:9px;background:rgb(0,0,0)"></div>
<div class="r" style="left:461px;top:437px;width:1px;height:18px;background:#fff;"></div>
<div class="r" style="left:463px;top:437px;width:1px;height:18px;background:#fff;"></div>
<div class="r" style="left:212px;top:437px;width:1px;height:18px;background:#2a2e32;"></div>
<div class="r" style="left:213px;top:437px;width:1px;height:18px;background:#fff;"></div>
<div class="r" style="left:196px;top:465px;width:238px;height:238px;background:#000;"></div>
<div class="r" style="left:197px;top:466px;width:236px;height:236px;background:linear-gradient(to bottom, rgba(0,0,0,0.000) 0%, rgba(0,0,0,0.034) 5%, rgba(0,0,0,0.069) 10%, rgba(0,0,0,0.105) 15%, rgba(0,0,0,0.141) 20%, rgba(0,0,0,0.178) 25%, rgba(0,0,0,0.215) 30%, rgba(0,0,0,0.254) 35%, rgba(0,0,0,0.293) 40%, rgba(0,0,0,0.334) 45%, rgba(0,0,0,0.376) 50%, rgba(0,0,0,0.419) 55%, rgba(0,0,0,0.464) 60%, rgba(0,0,0,0.510) 65%, rgba(0,0,0,0.559) 70%, rgba(0,0,0,0.610) 75%, rgba(0,0,0,0.665) 80%, rgba(0,0,0,0.725) 85%, rgba(0,0,0,0.791) 90%, rgba(0,0,0,0.870) 95%, rgba(0,0,0,1.000) 100%), linear-gradient(to right, rgb(255,255,255) 0%, rgb(255,234,234) 10%, rgb(255,213,213) 20%, rgb(255,192,192) 30%, rgb(255,169,169) 40%, rgb(255,146,146) 50%, rgb(255,123,123) 60%, rgb(255,97,97) 70%, rgb(255,70,70) 80%, rgb(255,40,40) 90%, rgb(255,0,0) 100%);"></div>
<svg class="r" style="left:196px;top:697px;" width="7" height="7" viewBox="0 0 7 7" shape-rendering="crispEdges"><rect x="0" y="0" width="2" height="1" fill="#fff"/><rect x="1" y="1" width="1" height="4" fill="#fff"/><rect x="1" y="4" width="5" height="1" fill="#fff"/><rect x="5" y="4" width="1" height="2" fill="#fff"/><rect x="0" y="1" width="1" height="5" fill="#000"/><rect x="0" y="5" width="5" height="1" fill="#000"/></svg>
<div class="r" style="left:8px;top:708px;width:475px;height:1px;background:#fcfcfc;"></div>
<div class="r" style="left:443px;top:464px;width:35px;height:240px;background:#000;"></div>
<div class="r" style="left:444px;top:465px;width:33px;height:238px;background:linear-gradient(to bottom, #f00 0%, #f0f 16.7%, #00f 33.3%, #0ff 50%, #0f0 66.7%, #ff0 82.5%, #ffb400 90%, #ff6a00 95%, #ff1e00 100%);"></div>
<svg class="r" style="left:435px;top:698px;" width="8" height="11" viewBox="0 0 8 11"><path d="M1.3 1.5 L6.8 5.5 L1.3 9.5 Z" fill="#20c0f8" stroke="#000" stroke-width="1.1" stroke-linejoin="miter"/></svg>
<svg class="r" style="left:489px;top:120px;" width="16" height="16" viewBox="0 0 16 16"><path d="M9 12 L12 1" stroke="#5a90c8" stroke-width="1.2"/><path d="M7 10 L14 3" stroke="#5a90c8" stroke-width="1.2"/><circle cx="4.5" cy="12" r="2.4" fill="none" stroke="#d84040" stroke-width="1.6"/><circle cx="9.5" cy="13" r="2.4" fill="none" stroke="#d84040" stroke-width="1.6"/></svg>
<svg class="r" style="left:511px;top:120px;" width="16" height="16" viewBox="0 0 16 16" shape-rendering="crispEdges"><rect x="1.5" y="0.5" width="8" height="11" fill="#f4f4f4" stroke="#444"/><path d="M3 3 H7 M3 5 H7 M3 7 H7" stroke="#777"/><rect x="6.5" y="4.5" width="9" height="11" fill="#fff" stroke="#2a4ea0"/><path d="M8 8 H14 M8 10 H14 M8 12 H14" stroke="#2a4ea0"/></svg>
<svg class="r" style="left:533px;top:120px;" width="16" height="16" viewBox="0 0 16 16" shape-rendering="crispEdges"><rect x="0.5" y="1.5" width="11" height="13" fill="#f0b030" stroke="#8a6010"/><rect x="3" y="0" width="6" height="3" fill="#444"/><rect x="6.5" y="5.5" width="9" height="10" fill="#fff" stroke="#2a4ea0"/><path d="M8 8 H14 M8 10 H14 M8 12 H14" stroke="#2a4ea0"/></svg>
<div class="r" style="left:555px;top:117px;width:1px;height:22px;background:#a9acaf;"></div>
<svg class="r" style="left:563px;top:120px;" width="16" height="16" viewBox="0 0 16 16"><path d="M3 7 C6 3 12 3 12 9 V11" stroke="#b0b4c0" stroke-width="1.6" fill="none"/><path d="M0 4 L1 10 L6 8 Z" fill="#b0b4c0"/></svg>
<svg class="r" style="left:585px;top:120px;" width="16" height="16" viewBox="0 0 16 16"><path d="M13 7 C10 3 4 3 4 9 V11" stroke="#b0b4c0" stroke-width="1.6" fill="none"/><path d="M16 4 L15 10 L10 8 Z" fill="#b0b4c0"/></svg>
<div class="r" style="left:607px;top:117px;width:1px;height:22px;background:#a9acaf;"></div>
<svg class="r" style="left:615px;top:120px;" width="16" height="16" viewBox="0 0 16 16"><defs><pattern id="ck" width="2" height="2" patternUnits="userSpaceOnUse"><rect width="2" height="2" fill="#d8d8d8"/><rect width="1" height="1" fill="#909090"/><rect x="1" y="1" width="1" height="1" fill="#909090"/></pattern></defs><path d="M13.86,10.22 L10.72,13.36 L6.28,13.36 L3.14,10.22 L3.14,5.78 L6.28,2.64 L10.72,2.64 L13.86,5.78 Z" fill="url(#ck)" stroke="#e00000" stroke-width="0.95"/><path d="M13.86,10.22 L10.72,13.36 L6.28,13.36 L3.14,10.22 L3.14,5.78 L6.28,2.64 L10.72,2.64 L13.86,5.78 Z" fill="none" stroke="#300" stroke-width="0.6" stroke-dasharray="0.7 1.6"/></svg>
<svg class="r" style="left:637px;top:120px;" width="16" height="16" viewBox="0 0 16 16"><defs><pattern id="ck" width="2" height="2" patternUnits="userSpaceOnUse"><rect width="2" height="2" fill="#d8d8d8"/><rect width="1" height="1" fill="#909090"/><rect x="1" y="1" width="1" height="1" fill="#909090"/></pattern></defs><rect x="0" y="8" width="16" height="8" fill="url(#ck)"/><path d="M13.67,9.64 L10.64,12.67 L6.36,12.67 L3.33,9.64 L3.33,5.36 L6.36,2.33 L10.64,2.33 L13.67,5.36 Z" fill="url(#ck)" stroke="#e00000" stroke-width="0.95"/><path d="M13.67,9.64 L10.64,12.67 L6.36,12.67 L3.33,9.64 L3.33,5.36 L6.36,2.33 L10.64,2.33 L13.67,5.36 Z" fill="none" stroke="#300" stroke-width="0.6" stroke-dasharray="0.7 1.6"/><path d="M3.4 8 H13.6 L12 11.8 L9.8 13.4 H7.2 L5 11.8 Z" fill="#fff"/><path d="M3.2 9 C4 12 6 13.4 8.5 13.4 C11 13.4 13 12 13.8 9" fill="none" stroke="#e00000" stroke-width="1.1"/><path d="M0 8.5 H16" stroke="#0000ff" stroke-width="1.3"/></svg>
<svg class="r" style="left:659px;top:120px;" width="16" height="16" viewBox="0 0 16 16"><defs><pattern id="ck" width="2" height="2" patternUnits="userSpaceOnUse"><rect width="2" height="2" fill="#d8d8d8"/><rect width="1" height="1" fill="#909090"/><rect x="1" y="1" width="1" height="1" fill="#909090"/></pattern></defs><path d="M13.67,10.14 L10.64,13.17 L6.36,13.17 L3.33,10.14 L3.33,5.86 L6.36,2.83 L10.64,2.83 L13.67,5.86 Z" fill="url(#ck)" stroke="#e00000" stroke-width="0.95"/><path d="M13.67,10.14 L10.64,13.17 L6.36,13.17 L3.33,10.14 L3.33,5.86 L6.36,2.83 L10.64,2.83 L13.67,5.86 Z" fill="none" stroke="#300" stroke-width="0.6" stroke-dasharray="0.7 1.6"/><path d="M2 14 L14 4 M4 2 L13 14" stroke="#111" stroke-width="1.1"/></svg>
<svg class="r" style="left:681px;top:120px;" width="16" height="16" viewBox="0 0 16 16"><rect x="1.5" y="1.5" width="13" height="13" fill="none" stroke="#e00000" stroke-width="1.1"/><rect x="1.5" y="1.5" width="13" height="13" fill="none" stroke="#300" stroke-width="0.6" stroke-dasharray="0.6 1.4"/><path d="M1 0 L1 10.5 L3.8 8.2 L6.2 13.5 L8 12.7 L5.8 7.5 L9.2 7.5 Z" fill="#fff" stroke="#000" stroke-width="0.9"/></svg>
<svg class="r" style="left:703px;top:120px;" width="16" height="16" viewBox="0 0 16 16"><path d="M3.5 0 L5.5 2.3 H4.3 V4.3 H6.3 V3.1 L8.5 5 L6.3 6.9 V5.7 H4.3 V7.7 H5.5 L3.5 10 L1.5 7.7 H2.7 V5.7 H0.7 V6.9 L-1.5 5 L0.7 3.1 V4.3 H2.7 V2.3 H1.5 Z" fill="#0000ff" transform="translate(1.5,0)"/><path d="M8.5 15.5 C7 13 6 11.5 6.5 10.5 L8 11.5 V6 C8 5 9.5 5 9.5 6 V9.5 V4.5 C9.5 3.5 11 3.5 11 4.5 V9.5 V5 C11 4 12.5 4 12.5 5 V9.5 V6 C12.5 5 14 5 14 6 V11.5 C14 13.5 13.3 14.5 13 15.5 Z" fill="#fff" stroke="#000" stroke-width="0.9"/></svg>
<div class="r" style="left:725px;top:117px;width:1px;height:22px;background:#a9acaf;"></div>
<svg class="r" style="left:733px;top:120px;" width="16" height="16" viewBox="0 0 16 16"><path d="M3 2 V14 H14" stroke="#800000" stroke-width="1.3" fill="none"/><path d="M0.5 5 L3 1.5 L5.5 5" stroke="#800000" stroke-width="1.2" fill="none"/><path d="M11 11.5 L14.5 14 L11 16.5" stroke="#800000" stroke-width="1.2" fill="none"/><text x="6" y="8" font-family="Liberation Sans" font-size="8" fill="#000">3×</text></svg>
<div class="r" style="left:755px;top:117px;width:1px;height:22px;background:#a9acaf;"></div>
<svg class="r" style="left:763px;top:120px;" width="16" height="16" viewBox="0 0 16 16"><path d="M13.54,10.30 L10.30,13.54 L5.70,13.54 L2.46,10.30 L2.46,5.70 L5.70,2.46 L10.30,2.46 L13.54,5.70 Z" fill="#007000" stroke="#e00000" stroke-width="1.1" stroke-dasharray="1.2 0.8"/></svg>
<svg class="r" style="left:785px;top:120px;" width="16" height="16" viewBox="0 0 16 16"><defs><pattern id="ck" width="2" height="2" patternUnits="userSpaceOnUse"><rect width="2" height="2" fill="#d8d8d8"/><rect width="1" height="1" fill="#909090"/><rect x="1" y="1" width="1" height="1" fill="#909090"/></pattern></defs><path d="M13.54,10.30 L10.30,13.54 L5.70,13.54 L2.46,10.30 L2.46,5.70 L5.70,2.46 L10.30,2.46 L13.54,5.70 Z" fill="url(#ck)" stroke="#e00000" stroke-width="1.1" stroke-dasharray="1.2 0.8"/></svg>
<svg class="r" style="left:807px;top:120px;" width="16" height="16" viewBox="0 0 16 16"><defs><radialGradient id="gg" cx="0.7" cy="0.7" r="0.7"><stop offset="0" stop-color="#00ff00"/><stop offset="0.5" stop-color="#608060"/><stop offset="1" stop-color="#000080"/></radialGradient></defs><path d="M13.54,10.30 L10.30,13.54 L5.70,13.54 L2.46,10.30 L2.46,5.70 L5.70,2.46 L10.30,2.46 L13.54,5.70 Z" fill="url(#gg)" stroke="#e00000" stroke-width="1.1" stroke-dasharray="1.2 0.8"/></svg>
<svg class="r" style="left:829px;top:120px;" width="16" height="16" viewBox="0 0 16 16"><path d="M8 1 V15" stroke="#000" stroke-width="1.8"/><path d="M1 8 H15" stroke="#0000ff" stroke-width="1.6"/><path d="M0 8 L4 4 V12 Z M16 8 L12 4 V12 Z" fill="#0000ff"/></svg>
<svg class="r" style="left:851px;top:120px;" width="16" height="16" viewBox="0 0 16 16"><path d="M1 8 H15" stroke="#000" stroke-width="1.8"/><path d="M8 1 V15" stroke="#0000ff" stroke-width="1.6"/><path d="M8 0 L4 4 H12 Z M8 16 L4 12 H12 Z" fill="#0000ff"/></svg>
<svg class="r" style="left:873px;top:120px;" width="16" height="16" viewBox="0 0 16 16"><path d="M8 1 V15" stroke="#000" stroke-width="1.8"/><path d="M1 8 H5" stroke="#0000ff" stroke-width="1" stroke-dasharray="1 1"/><path d="M8 8 H12" stroke="#0000ff" stroke-width="1.6"/><path d="M16 8 L12 4 V12 Z" fill="#0000ff"/></svg>
<svg class="r" style="left:895px;top:120px;" width="16" height="16" viewBox="0 0 16 16"><path d="M1 8 H15" stroke="#000" stroke-width="1.8"/><path d="M8 1 V5" stroke="#0000ff" stroke-width="1" stroke-dasharray="1 1"/><path d="M8 8 V12" stroke="#0000ff" stroke-width="1.6"/><path d="M8 16 L4 12 H12 Z" fill="#0000ff"/></svg>
<svg class="r" style="left:917px;top:120px;" width="16" height="16" viewBox="0 0 16 16"><path d="M1 15 H15" stroke="#000" stroke-width="1.6"/><path d="M2 1 V13" stroke="#000" stroke-width="1.2" stroke-dasharray="1 1"/><path d="M2 13 L11 4" stroke="#000" stroke-width="1" stroke-dasharray="1 1"/><path d="M3 2 C9 2 13 6 14 11" stroke="#0000ff" stroke-width="1.3" fill="none"/><path d="M11 10 L14.5 14 L16 9 Z" fill="#0000ff"/></svg>
<svg class="r" style="left:939px;top:120px;" width="16" height="16" viewBox="0 0 16 16"><path d="M1 15 L15 11" stroke="#000" stroke-width="1.6"/><path d="M2 1 V13" stroke="#000" stroke-width="1.2" stroke-dasharray="1 1"/><path d="M2 1 H10" stroke="#000" stroke-width="1" stroke-dasharray="1 1"/><path d="M5 11 L12 4" stroke="#000" stroke-width="1" stroke-dasharray="1 1"/><path d="M8 2 C12 3 14 5 15 8" stroke="#0000ff" stroke-width="1.2" fill="none" stroke-dasharray="2 1"/><path d="M12 8 L15.5 10 L16 6 Z" fill="#0000ff"/></svg>
<svg class="r" style="left:961px;top:120px;" width="16" height="16" viewBox="0 0 16 16"><path d="M5.5 1.5 V15 M1 11.5 H14.5" stroke="#0000ff" stroke-width="1.3"/><path d="M5.5 0 L3 3.5 H8 Z M16 11.5 L12.5 9 V14 Z M0 11.5 L2.5 10 V13 Z M5.5 16 L4 13.5 H7 Z" fill="#0000ff"/></svg>
<svg class="r" style="left:983px;top:120px;" width="16" height="16" viewBox="0 0 16 16"><g opacity="1.0" transform="translate(2,0)"><rect x="0" y="0" width="14" height="10" fill="#000"/><rect x="1" y="1" width="12" height="5" fill="#00ffff"/><rect x="1" y="6" width="12" height="3" fill="#00a000"/><path d="M1 6 V4 C1 2 4 2 4 4 V6 M7 6 V4 C7 2.5 9 2.5 9 4 V6" fill="#000"/><ellipse cx="3.5" cy="5" rx="1.6" ry="2.2" fill="#00ff00" stroke="#000" stroke-width="0.6"/><path d="M8 4 L10.5 1.2 L13 4 Z" fill="#c00000"/><rect x="8.5" y="4" width="4" height="4" fill="#c8b000"/><rect x="10" y="5.5" width="1.2" height="1.2" fill="#0000a0"/></g><g opacity="1.0" transform="translate(0,6)"><rect x="0" y="0" width="14" height="10" fill="#000"/><rect x="1" y="1" width="12" height="5" fill="#20a0a0"/><rect x="1" y="6" width="12" height="3" fill="#006000"/><path d="M1 6 V4 C1 2 4 2 4 4 V6 M7 6 V4 C7 2.5 9 2.5 9 4 V6" fill="#000"/><ellipse cx="3.5" cy="5" rx="1.6" ry="2.2" fill="#00c000" stroke="#000" stroke-width="0.6"/><path d="M8 4 L10.5 1.2 L13 4 Z" fill="#700000"/><rect x="8.5" y="4" width="4" height="4" fill="#806000"/><rect x="10" y="5.5" width="1.2" height="1.2" fill="#0000a0"/></g></svg>
<svg class="r" style="left:1005px;top:120px;" width="16" height="16" viewBox="0 0 16 16"><g opacity="1.0" transform="translate(2,0)"><rect x="0" y="0" width="14" height="10" fill="#000"/><rect x="1" y="1" width="12" height="5" fill="#00ffff"/><rect x="1" y="6" width="12" height="3" fill="#00a000"/><path d="M1 6 V4 C1 2 4 2 4 4 V6 M7 6 V4 C7 2.5 9 2.5 9 4 V6" fill="#000"/><ellipse cx="3.5" cy="5" rx="1.6" ry="2.2" fill="#00ff00" stroke="#000" stroke-width="0.6"/><path d="M8 4 L10.5 1.2 L13 4 Z" fill="#c00000"/><rect x="8.5" y="4" width="4" height="4" fill="#c8b000"/><rect x="10" y="5.5" width="1.2" height="1.2" fill="#0000a0"/></g><g opacity="1.0" transform="translate(0,6)"><rect x="0" y="0" width="14" height="10" fill="#000"/><rect x="1" y="1" width="12" height="5" fill="#ff0000"/><rect x="1" y="6" width="12" height="3" fill="#005000"/><path d="M1 6 V4 C1 2 4 2 4 4 V6 M7 6 V4 C7 2.5 9 2.5 9 4 V6" fill="#000"/><ellipse cx="3.5" cy="5" rx="1.6" ry="2.2" fill="#008000" stroke="#000" stroke-width="0.6"/><path d="M8 4 L10.5 1.2 L13 4 Z" fill="#a00000"/><rect x="8.5" y="4" width="4" height="4" fill="#c00000"/><rect x="10" y="5.5" width="1.2" height="1.2" fill="#0000a0"/></g></svg>
<svg class="r" style="left:1027px;top:120px;" width="16" height="16" viewBox="0 0 16 16"><g opacity="1.0" transform="translate(2,0)"><rect x="0" y="0" width="14" height="10" fill="#000"/><rect x="1" y="1" width="12" height="5" fill="#909090"/><rect x="1" y="6" width="12" height="3" fill="#303030"/><path d="M1 6 V4 C1 2 4 2 4 4 V6 M7 6 V4 C7 2.5 9 2.5 9 4 V6" fill="#000"/><ellipse cx="3.5" cy="5" rx="1.6" ry="2.2" fill="#202020" stroke="#000" stroke-width="0.6"/><path d="M8 4 L10.5 1.2 L13 4 Z" fill="#404040"/><rect x="8.5" y="4" width="4" height="4" fill="#505050"/><rect x="10" y="5.5" width="1.2" height="1.2" fill="#0000a0"/></g><g opacity="1.0" transform="translate(0,6)"><rect x="0" y="0" width="14" height="10" fill="#000"/><rect x="1" y="1" width="12" height="5" fill="#00ffff"/><rect x="1" y="6" width="12" height="3" fill="#00a000"/><path d="M1 6 V4 C1 2 4 2 4 4 V6 M7 6 V4 C7 2.5 9 2.5 9 4 V6" fill="#000"/><ellipse cx="3.5" cy="5" rx="1.6" ry="2.2" fill="#00ff00" stroke="#000" stroke-width="0.6"/><path d="M8 4 L10.5 1.2 L13 4 Z" fill="#c00000"/><rect x="8.5" y="4" width="4" height="4" fill="#c8b000"/><rect x="10" y="5.5" width="1.2" height="1.2" fill="#0000a0"/></g></svg>
<svg class="r" style="left:1049px;top:120px;" width="16" height="16" viewBox="0 0 16 16"><g opacity="1.0" transform="translate(2,0)"><rect x="0" y="0" width="14" height="10" fill="#000"/><rect x="1" y="1" width="12" height="5" fill="#00ffff"/><rect x="1" y="6" width="12" height="3" fill="#00a000"/><path d="M1 6 V4 C1 2 4 2 4 4 V6 M7 6 V4 C7 2.5 9 2.5 9 4 V6" fill="#000"/><ellipse cx="3.5" cy="5" rx="1.6" ry="2.2" fill="#00ff00" stroke="#000" stroke-width="0.6"/><path d="M8 4 L10.5 1.2 L13 4 Z" fill="#c00000"/><rect x="8.5" y="4" width="4" height="4" fill="#c8b000"/><rect x="10" y="5.5" width="1.2" height="1.2" fill="#0000a0"/></g><g opacity="1.0" transform="translate(0,6)"><rect x="0" y="0" width="14" height="10" fill="#707070"/><rect x="1" y="1" width="12" height="5" fill="#70a0a0"/><rect x="1" y="6" width="12" height="3" fill="#607860"/><path d="M1 6 V4 C1 2 4 2 4 4 V6 M7 6 V4 C7 2.5 9 2.5 9 4 V6" fill="#000"/><ellipse cx="3.5" cy="5" rx="1.6" ry="2.2" fill="#70a070" stroke="#000" stroke-width="0.6"/><path d="M8 4 L10.5 1.2 L13 4 Z" fill="#906060"/><rect x="8.5" y="4" width="4" height="4" fill="#a09060"/><rect x="10" y="5.5" width="1.2" height="1.2" fill="#0000a0"/></g></svg>
<svg class="r" style="left:1071px;top:120px;" width="16" height="16" viewBox="0 0 16 16"><g opacity="1.0" transform="translate(2,0)"><rect x="0" y="0" width="14" height="10" fill="#000"/><rect x="1" y="1" width="12" height="5" fill="#00ffff"/><rect x="1" y="6" width="12" height="3" fill="#00a000"/><path d="M1 6 V4 C1 2 4 2 4 4 V6 M7 6 V4 C7 2.5 9 2.5 9 4 V6" fill="#000"/><ellipse cx="3.5" cy="5" rx="1.6" ry="2.2" fill="#00ff00" stroke="#000" stroke-width="0.6"/><path d="M8 4 L10.5 1.2 L13 4 Z" fill="#c00000"/><rect x="8.5" y="4" width="4" height="4" fill="#c8b000"/><rect x="10" y="5.5" width="1.2" height="1.2" fill="#0000a0"/></g><g opacity="0.85" transform="translate(0,6)"><rect x="0" y="0" width="14" height="10" fill="#a0b0a0"/><rect x="1" y="1" width="12" height="5" fill="#a0e8e0"/><rect x="1" y="6" width="12" height="3" fill="#90c090"/><path d="M1 6 V4 C1 2 4 2 4 4 V6 M7 6 V4 C7 2.5 9 2.5 9 4 V6" fill="#000"/><ellipse cx="3.5" cy="5" rx="1.6" ry="2.2" fill="#a0d0a0" stroke="#000" stroke-width="0.6"/><path d="M8 4 L10.5 1.2 L13 4 Z" fill="#c09090"/><rect x="8.5" y="4" width="4" height="4" fill="#c8c090"/><rect x="10" y="5.5" width="1.2" height="1.2" fill="#0000a0"/></g></svg>
<svg class="r" style="left:1093px;top:120px;" width="16" height="16" viewBox="0 0 16 16" shape-rendering="crispEdges"><rect x="1" y="2" width="3" height="12" fill="#ff0000"/><rect x="4" y="2" width="3" height="12" fill="#00c000"/><rect x="7" y="2" width="3" height="12" fill="#0000ff"/><rect x="10" y="2" width="2" height="2" fill="#707070"/><rect x="11" y="4" width="2" height="2" fill="#707070"/><rect x="10" y="6" width="2" height="2" fill="#707070"/><rect x="11" y="8" width="2" height="2" fill="#707070"/><rect x="10" y="10" width="2" height="2" fill="#707070"/><rect x="11" y="12" width="2" height="2" fill="#707070"/></svg>
<svg class="r" style="left:1115px;top:120px;" width="17" height="16" viewBox="0 0 17 16"><circle cx="9.5" cy="8" r="7.5" fill="#000080"/><rect x="0" y="5" width="5" height="6" fill="#000080"/></svg>
<div class="r" style="left:486px;top:145px;width:21px;height:21px;background:linear-gradient(#93cdea,#7db6dc);border-radius:3px;box-shadow:0 0 0 1px rgba(120,160,190,0.35);"></div>
<svg class="r" style="left:489px;top:147px;" width="16" height="16" viewBox="0 0 16 16"><path d="M1.5 1.5 H6 L7.5 2.8 L10 3.2 L11 4.6 L13.8 5.6 L14.6 7.2 L14 9.4 L12.6 10.8 L12.6 13.2 L14.6 15" stroke="#000" stroke-width="1.3" fill="none"/><path d="M1.5 1.5 V11.8 L3.9 9.8 L6.2 13.8 L7.9 12.8 L5.8 8.9 L8.8 8.9 Z" fill="#fff" stroke="#000" stroke-width="1.1" stroke-linejoin="miter"/></svg>
<svg class="r" style="left:511px;top:147px;" width="18" height="18" viewBox="0 0 18 18"><path d="M0 13 H8 M4 9 V17" stroke="#000" stroke-width="2.2"/><path d="M6.5 10 L14.5 2.3 V16" stroke="#000" stroke-width="1.1" fill="none"/></svg>
<svg class="r" style="left:533px;top:147px;" width="18" height="18" viewBox="0 0 18 18"><path d="M0 13 H8 M4 9 V17" stroke="#000" stroke-width="2.2"/><path d="M2.6 6.5 A6.3 6.3 0 1 1 6.8 14.2" stroke="#000" stroke-width="1.2" fill="none"/></svg>
<svg class="r" style="left:555px;top:147px;" width="18" height="18" viewBox="0 0 18 18"><defs><pattern id="ht" width="3" height="3" patternUnits="userSpaceOnUse" patternTransform="rotate(45)"><rect width="3" height="3" fill="#b8b8b8"/><rect width="1.5" height="3" fill="#000"/></pattern></defs><circle cx="8.8" cy="8" r="6.5" fill="url(#ht)"/><path d="M2.5 7 A6.5 6.5 0 0 1 15 7" stroke="#000" stroke-width="1.2" fill="none"/><rect x="0" y="9" width="9" height="9" fill="#eff0f1"/><path d="M0 13 H8 M4 9 V17" stroke="#000" stroke-width="2.2"/></svg>
<svg class="r" style="left:577px;top:147px;" width="18" height="18" viewBox="0 0 18 18"><path d="M0 13 H8 M4 9 V17" stroke="#000" stroke-width="2.2"/><path d="M2.7 9 V1.7 H15.3 V14.3 H7" stroke="#000" stroke-width="1.3" fill="none"/></svg>
<svg class="r" style="left:599px;top:147px;" width="18" height="18" viewBox="0 0 18 18"><defs><pattern id="ht" width="3" height="3" patternUnits="userSpaceOnUse" patternTransform="rotate(45)"><rect width="3" height="3" fill="#b8b8b8"/><rect width="1.5" height="3" fill="#000"/></pattern></defs><rect x="2.5" y="1.5" width="13" height="13" fill="url(#ht)" stroke="#000" stroke-width="1.1"/><rect x="0" y="9" width="7" height="9" fill="#eff0f1"/><path d="M0 13 H8 M4 9 V17" stroke="#000" stroke-width="2.2"/></svg>
<svg class="r" style="left:622px;top:149px;" width="13" height="13" viewBox="0 0 13 13"><defs><radialGradient id="dm"><stop offset="0" stop-color="#ffff00"/><stop offset="0.45" stop-color="#ffc000"/><stop offset="0.8" stop-color="#f00000"/></radialGradient></defs><path d="M6.5 0.8 L12.2 6.5 L6.5 12.2 L0.8 6.5 Z" fill="url(#dm)" stroke="#000" stroke-width="1"/></svg>
<div class="t" style="left:644px;top:146.5px;font:20px/20px 'Liberation Serif';color:#000;transform:scaleX(0.95);transform-origin:0 0;">T</div>
<div class="r" style="left:665px;top:144px;width:1px;height:23px;background:#a9acaf;"></div>
<div class="r" style="left:670px;top:145px;width:21px;height:21px;background:linear-gradient(#93cdea,#7db6dc);border-radius:3px;box-shadow:0 0 0 1px rgba(120,160,190,0.35);"></div>
<svg class="r" style="left:673px;top:147px;shape-rendering:crispEdges;" width="16" height="16" viewBox="0 0 16 16"><rect x="1" y="10" width="14" height="1" fill="#000"/><circle shape-rendering="auto" cx="2.5" cy="5" r="0.70" fill="#000"/><text x="8.6" y="8" font-family="Liberation Sans" font-weight="bold" font-size="7.5" fill="#000">1</text></svg>
<svg class="r" style="left:695px;top:147px;shape-rendering:crispEdges;" width="16" height="16" viewBox="0 0 16 16"><rect x="1" y="10" width="14" height="2" fill="#000"/><circle shape-rendering="auto" cx="3.0" cy="5" r="1.00" fill="#000"/><text x="8.6" y="8" font-family="Liberation Sans" font-weight="bold" font-size="7.5" fill="#000">2</text></svg>
<svg class="r" style="left:717px;top:147px;shape-rendering:crispEdges;" width="16" height="16" viewBox="0 0 16 16"><rect x="1" y="10" width="14" height="3" fill="#000"/><circle shape-rendering="auto" cx="3.5" cy="5" r="1.50" fill="#000"/><text x="8.6" y="8" font-family="Liberation Sans" font-weight="bold" font-size="7.5" fill="#000">3</text></svg>
<svg class="r" style="left:739px;top:147px;shape-rendering:crispEdges;" width="16" height="16" viewBox="0 0 16 16"><rect x="1" y="10" width="14" height="4" fill="#000"/><circle shape-rendering="auto" cx="4.0" cy="5" r="2.00" fill="#000"/><text x="8.6" y="8" font-family="Liberation Sans" font-weight="bold" font-size="7.5" fill="#000">4</text></svg>
<svg class="r" style="left:761px;top:147px;shape-rendering:crispEdges;" width="16" height="16" viewBox="0 0 16 16"><rect x="1" y="10" width="14" height="5" fill="#000"/><circle shape-rendering="auto" cx="4.5" cy="5" r="2.50" fill="#000"/><text x="9.6" y="8" font-family="Liberation Sans" font-weight="bold" font-size="7.5" fill="#000">5</text></svg>
<svg class="r" style="left:783px;top:147px;shape-rendering:crispEdges;" width="16" height="16" viewBox="0 0 16 16"><rect x="1" y="10" width="14" height="6" fill="#000"/><circle shape-rendering="auto" cx="5.0" cy="5" r="3.00" fill="#000"/><text x="9.6" y="8" font-family="Liberation Sans" font-weight="bold" font-size="7.5" fill="#000">6</text></svg>
<div class="r" style="left:805px;top:144px;width:1px;height:23px;background:#a9acaf;"></div>
<svg class="r" style="left:813px;top:147px;" width="16" height="16" viewBox="0 0 16 16"><rect x="1.5" y="3.5" width="11" height="11" fill="#eee" stroke="#c0c4c8"/><rect x="4.5" y="0.5" width="10" height="8" fill="#f4f4f4" stroke="#c8ccd0"/><path d="M5 10 L9 6 L13 10" stroke="#c0d8c0" fill="none"/></svg>
<div class="r" style="left:835px;top:144px;width:1px;height:23px;background:#a9acaf;"></div>
<svg class="r" style="left:843px;top:147px;" width="16" height="16" viewBox="0 0 16 16"><path d="M9.5 9.5 L15 15" stroke="#8a2020" stroke-width="2.2"/><circle cx="6" cy="6" r="5" fill="#00e0f0" stroke="#000" stroke-width="1.1"/><path d="M3 6 H9" stroke="#000080" stroke-width="1.8"/></svg>
<svg class="r" style="left:865px;top:147px;" width="16" height="16" viewBox="0 0 16 16"><path d="M9.5 9.5 L15 15" stroke="#8a2020" stroke-width="2.2"/><circle cx="6" cy="6" r="5" fill="#00e0f0" stroke="#000" stroke-width="1.1"/><path d="M3 6 H9 M6 3 V9" stroke="#000080" stroke-width="1.8"/></svg>
<svg class="r" style="left:887px;top:147px;" width="16" height="16" viewBox="0 0 16 16" shape-rendering="crispEdges"><rect x="0.5" y="5.5" width="15" height="10" fill="#007000" stroke="#000"/></svg>
<svg class="r" style="left:887px;top:147px;" width="16" height="16" viewBox="0 0 16 16"><circle cx="8" cy="6" r="4.6" fill="#ff0000" stroke="#000" stroke-width="1"/></svg>
<div class="r" style="left:484px;top:169px;width:782px;height:1px;background:#a4a7aa;"></div>
<div class="r" style="left:483px;top:169px;width:781px;height:474px;background:#fcfcfc;border-left:1px solid #a4a7aa;border-top:1px solid #a4a7aa;border-right:1px solid #e4e5e6;border-bottom:1px solid #e4e5e6;"></div>
<div class="r" style="left:485px;top:171px;width:209px;height:209px;background:#000;"></div>
<div class="r" style="left:486px;top:172px;width:12px;height:12px;background:#c0c0c0"></div>
<div class="r" style="left:499px;top:172px;width:12px;height:12px;background:#c0c0c0"></div>
<div class="r" style="left:512px;top:172px;width:12px;height:12px;background:#c0c0c0"></div>
<div class="r" style="left:525px;top:172px;width:12px;height:12px;background:#c0c0c0"></div>
<div class="r" style="left:538px;top:172px;width:12px;height:12px;background:#c0c0c0"></div>
<div class="r" style="left:551px;top:172px;width:12px;height:12px;background:#c0c0c0"></div>
<div class="r" style="left:564px;top:172px;width:12px;height:12px;background:#c0c0c0"></div>
<div class="r" style="left:577px;top:172px;width:12px;height:12px;background:#c0c0c0"></div>
<div class="r" style="left:590px;top:172px;width:12px;height:12px;background:#c0c0c0"></div>
<div class="r" style="left:603px;top:172px;width:12px;height:12px;background:#c0c0c0"></div>
<div class="r" style="left:616px;top:172px;width:12px;height:12px;background:#c0c0c0"></div>
<div class="r" style="left:629px;top:172px;width:12px;height:12px;background:#c0c0c0"></div>
<div class="r" style="left:642px;top:172px;width:12px;height:12px;background:#c0c0c0"></div>
<div class="r" style="left:655px;top:172px;width:12px;height:12px;background:#c0c0c0"></div>
<div class="r" style="left:668px;top:172px;width:12px;height:12px;background:#c0c0c0"></div>
<div class="r" style="left:681px;top:172px;width:12px;height:12px;background:#c0c0c0"></div>
<div class="r" style="left:486px;top:185px;width:12px;height:12px;background:#c0c0c0"></div>
<div class="r" style="left:681px;top:185px;width:12px;height:12px;background:#c0c0c0"></div>
<div class="r" style="left:486px;top:198px;width:12px;height:12px;background:#c0c0c0"></div>
<div class="r" style="left:512px;top:198px;width:12px;height:12px;background:rgb(255,0,0)"></div>
<div class="r" style="left:525px;top:198px;width:12px;height:12px;background:rgb(255,0,0)"></div>
<div class="r" style="left:538px;top:198px;width:12px;height:12px;background:rgb(255,0,0)"></div>
<div class="r" style="left:551px;top:198px;width:12px;height:12px;background:rgb(255,0,0)"></div>
<div class="r" style="left:564px;top:198px;width:12px;height:12px;background:rgb(255,0,0)"></div>
<div class="r" style="left:577px;top:198px;width:12px;height:12px;background:rgb(255,0,0)"></div>
<div class="r" style="left:590px;top:198px;width:12px;height:12px;background:rgb(255,0,0)"></div>
<div class="r" style="left:603px;top:198px;width:12px;height:12px;background:rgb(255,0,0)"></div>
<div class="r" style="left:616px;top:198px;width:12px;height:12px;background:rgb(255,0,0)"></div>
<div class="r" style="left:629px;top:198px;width:12px;height:12px;background:rgb(255,0,0)"></div>
<div class="r" style="left:642px;top:198px;width:12px;height:12px;background:rgb(255,0,0)"></div>
<div class="r" style="left:655px;top:198px;width:12px;height:12px;background:rgb(128,0,64)"></div>
<div class="r" style="left:681px;top:198px;width:12px;height:12px;background:#c0c0c0"></div>
<div class="r" style="left:486px;top:211px;width:12px;height:12px;background:#c0c0c0"></div>
<div class="r" style="left:512px;top:211px;width:12px;height:12px;background:rgb(255,0,0)"></div>
<div class="r" style="left:525px;top:211px;width:12px;height:12px;background:rgb(252,0,1)"></div>
<div class="r" style="left:538px;top:211px;width:12px;height:12px;background:rgb(249,0,3)"></div>
<div class="r" style="left:551px;top:211px;width:12px;height:12px;background:rgb(246,0,5)"></div>
<div class="r" style="left:564px;top:211px;width:12px;height:12px;background:rgb(241,0,7)"></div>
<div class="r" style="left:577px;top:211px;width:12px;height:12px;background:rgb(235,0,10)"></div>
<div class="r" style="left:590px;top:211px;width:12px;height:12px;background:rgb(228,0,14)"></div>
<div class="r" style="left:603px;top:211px;width:12px;height:12px;background:rgb(217,0,19)"></div>
<div class="r" style="left:616px;top:211px;width:12px;height:12px;background:rgb(201,0,27)"></div>
<div class="r" style="left:629px;top:211px;width:12px;height:12px;background:rgb(176,0,40)"></div>
<div class="r" style="left:642px;top:211px;width:12px;height:12px;background:rgb(128,0,64)"></div>
<div class="r" style="left:655px;top:211px;width:12px;height:12px;background:rgb(0,0,128)"></div>
<div class="r" style="left:681px;top:211px;width:12px;height:12px;background:#c0c0c0"></div>
<div class="r" style="left:486px;top:224px;width:12px;height:12px;background:#c0c0c0"></div>
<div class="r" style="left:512px;top:224px;width:12px;height:12px;background:rgb(255,0,0)"></div>
<div class="r" style="left:525px;top:224px;width:12px;height:12px;background:rgb(249,0,3)"></div>
<div class="r" style="left:538px;top:224px;width:12px;height:12px;background:rgb(243,0,6)"></div>
<div class="r" style="left:551px;top:224px;width:12px;height:12px;background:rgb(235,0,10)"></div>
<div class="r" style="left:564px;top:224px;width:12px;height:12px;background:rgb(226,0,14)"></div>
<div class="r" style="left:577px;top:224px;width:12px;height:12px;background:rgb(215,0,20)"></div>
<div class="r" style="left:590px;top:224px;width:12px;height:12px;background:rgb(201,0,27)"></div>
<div class="r" style="left:603px;top:224px;width:12px;height:12px;background:rgb(184,0,36)"></div>
<div class="r" style="left:616px;top:224px;width:12px;height:12px;background:rgb(160,0,48)"></div>
<div class="r" style="left:629px;top:224px;width:12px;height:12px;background:rgb(128,0,64)"></div>
<div class="r" style="left:642px;top:224px;width:12px;height:12px;background:rgb(79,0,88)"></div>
<div class="r" style="left:655px;top:224px;width:12px;height:12px;background:rgb(0,0,128)"></div>
<div class="r" style="left:681px;top:224px;width:12px;height:12px;background:#c0c0c0"></div>
<div class="r" style="left:486px;top:237px;width:12px;height:12px;background:#c0c0c0"></div>
<div class="r" style="left:512px;top:237px;width:12px;height:12px;background:rgb(255,0,0)"></div>
<div class="r" style="left:525px;top:237px;width:12px;height:12px;background:rgb(246,0,5)"></div>
<div class="r" style="left:538px;top:237px;width:12px;height:12px;background:rgb(235,0,10)"></div>
<div class="r" style="left:551px;top:237px;width:12px;height:12px;background:rgb(224,0,16)"></div>
<div class="r" style="left:564px;top:237px;width:12px;height:12px;background:rgb(210,0,23)"></div>
<div class="r" style="left:577px;top:237px;width:12px;height:12px;background:rgb(194,0,30)"></div>
<div class="r" style="left:590px;top:237px;width:12px;height:12px;background:rgb(176,0,40)"></div>
<div class="r" style="left:603px;top:237px;width:12px;height:12px;background:rgb(154,0,51)"></div>
<div class="r" style="left:616px;top:237px;width:12px;height:12px;background:rgb(128,0,64)"></div>
<div class="r" style="left:629px;top:237px;width:12px;height:12px;background:rgb(95,0,80)"></div>
<div class="r" style="left:642px;top:237px;width:12px;height:12px;background:rgb(54,0,101)"></div>
<div class="r" style="left:655px;top:237px;width:12px;height:12px;background:rgb(0,0,128)"></div>
<div class="r" style="left:681px;top:237px;width:12px;height:12px;background:#c0c0c0"></div>
<div class="r" style="left:486px;top:250px;width:12px;height:12px;background:#c0c0c0"></div>
<div class="r" style="left:512px;top:250px;width:12px;height:12px;background:rgb(255,0,0)"></div>
<div class="r" style="left:525px;top:250px;width:12px;height:12px;background:rgb(241,0,7)"></div>
<div class="r" style="left:538px;top:250px;width:12px;height:12px;background:rgb(226,0,14)"></div>
<div class="r" style="left:551px;top:250px;width:12px;height:12px;background:rgb(210,0,23)"></div>
<div class="r" style="left:564px;top:250px;width:12px;height:12px;background:rgb(192,0,32)"></div>
<div class="r" style="left:577px;top:250px;width:12px;height:12px;background:rgb(173,0,41)"></div>
<div class="r" style="left:590px;top:250px;width:12px;height:12px;background:rgb(151,0,52)"></div>
<div class="r" style="left:603px;top:250px;width:12px;height:12px;background:rgb(128,0,64)"></div>
<div class="r" style="left:616px;top:250px;width:12px;height:12px;background:rgb(101,0,77)"></div>
<div class="r" style="left:629px;top:250px;width:12px;height:12px;background:rgb(71,0,92)"></div>
<div class="r" style="left:642px;top:250px;width:12px;height:12px;background:rgb(38,0,109)"></div>
<div class="r" style="left:655px;top:250px;width:12px;height:12px;background:rgb(0,0,128)"></div>
<div class="r" style="left:681px;top:250px;width:12px;height:12px;background:#c0c0c0"></div>
<div class="r" style="left:486px;top:263px;width:12px;height:12px;background:#c0c0c0"></div>
<div class="r" style="left:512px;top:263px;width:12px;height:12px;background:rgb(255,0,0)"></div>
<div class="r" style="left:525px;top:263px;width:12px;height:12px;background:rgb(235,0,10)"></div>
<div class="r" style="left:538px;top:263px;width:12px;height:12px;background:rgb(215,0,20)"></div>
<div class="r" style="left:551px;top:263px;width:12px;height:12px;background:rgb(194,0,30)"></div>
<div class="r" style="left:564px;top:263px;width:12px;height:12px;background:rgb(173,0,41)"></div>
<div class="r" style="left:577px;top:263px;width:12px;height:12px;background:rgb(150,0,52)"></div>
<div class="r" style="left:590px;top:263px;width:12px;height:12px;background:rgb(128,0,64)"></div>
<div class="r" style="left:603px;top:263px;width:12px;height:12px;background:rgb(104,0,76)"></div>
<div class="r" style="left:616px;top:263px;width:12px;height:12px;background:rgb(79,0,88)"></div>
<div class="r" style="left:629px;top:263px;width:12px;height:12px;background:rgb(54,0,101)"></div>
<div class="r" style="left:642px;top:263px;width:12px;height:12px;background:rgb(27,0,114)"></div>
<div class="r" style="left:655px;top:263px;width:12px;height:12px;background:rgb(0,0,128)"></div>
<div class="r" style="left:681px;top:263px;width:12px;height:12px;background:#c0c0c0"></div>
<div class="r" style="left:486px;top:276px;width:12px;height:12px;background:#c0c0c0"></div>
<div class="r" style="left:512px;top:276px;width:12px;height:12px;background:rgb(255,0,0)"></div>
<div class="r" style="left:525px;top:276px;width:12px;height:12px;background:rgb(228,0,14)"></div>
<div class="r" style="left:538px;top:276px;width:12px;height:12px;background:rgb(201,0,27)"></div>
<div class="r" style="left:551px;top:276px;width:12px;height:12px;background:rgb(176,0,40)"></div>
<div class="r" style="left:564px;top:276px;width:12px;height:12px;background:rgb(151,0,52)"></div>
<div class="r" style="left:577px;top:276px;width:12px;height:12px;background:rgb(128,0,64)"></div>
<div class="r" style="left:590px;top:276px;width:12px;height:12px;background:rgb(105,0,76)"></div>
<div class="r" style="left:603px;top:276px;width:12px;height:12px;background:rgb(82,0,87)"></div>
<div class="r" style="left:616px;top:276px;width:12px;height:12px;background:rgb(61,0,98)"></div>
<div class="r" style="left:629px;top:276px;width:12px;height:12px;background:rgb(40,0,108)"></div>
<div class="r" style="left:642px;top:276px;width:12px;height:12px;background:rgb(20,0,118)"></div>
<div class="r" style="left:655px;top:276px;width:12px;height:12px;background:rgb(0,0,128)"></div>
<div class="r" style="left:681px;top:276px;width:12px;height:12px;background:#c0c0c0"></div>
<div class="r" style="left:486px;top:289px;width:12px;height:12px;background:#c0c0c0"></div>
<div class="r" style="left:512px;top:289px;width:12px;height:12px;background:rgb(255,0,0)"></div>
<div class="r" style="left:525px;top:289px;width:12px;height:12px;background:rgb(217,0,19)"></div>
<div class="r" style="left:538px;top:289px;width:12px;height:12px;background:rgb(184,0,36)"></div>
<div class="r" style="left:551px;top:289px;width:12px;height:12px;background:rgb(154,0,51)"></div>
<div class="r" style="left:564px;top:289px;width:12px;height:12px;background:rgb(128,0,64)"></div>
<div class="r" style="left:577px;top:289px;width:12px;height:12px;background:rgb(104,0,76)"></div>
<div class="r" style="left:590px;top:289px;width:12px;height:12px;background:rgb(82,0,87)"></div>
<div class="r" style="left:603px;top:289px;width:12px;height:12px;background:rgb(63,0,96)"></div>
<div class="r" style="left:616px;top:289px;width:12px;height:12px;background:rgb(45,0,105)"></div>
<div class="r" style="left:629px;top:289px;width:12px;height:12px;background:rgb(29,0,114)"></div>
<div class="r" style="left:642px;top:289px;width:12px;height:12px;background:rgb(14,0,121)"></div>
<div class="r" style="left:655px;top:289px;width:12px;height:12px;background:rgb(0,0,128)"></div>
<div class="r" style="left:681px;top:289px;width:12px;height:12px;background:#c0c0c0"></div>
<div class="r" style="left:486px;top:302px;width:12px;height:12px;background:#c0c0c0"></div>
<div class="r" style="left:512px;top:302px;width:12px;height:12px;background:rgb(255,0,0)"></div>
<div class="r" style="left:525px;top:302px;width:12px;height:12px;background:rgb(201,0,27)"></div>
<div class="r" style="left:538px;top:302px;width:12px;height:12px;background:rgb(160,0,48)"></div>
<div class="r" style="left:551px;top:302px;width:12px;height:12px;background:rgb(128,0,64)"></div>
<div class="r" style="left:564px;top:302px;width:12px;height:12px;background:rgb(101,0,77)"></div>
<div class="r" style="left:577px;top:302px;width:12px;height:12px;background:rgb(79,0,88)"></div>
<div class="r" style="left:590px;top:302px;width:12px;height:12px;background:rgb(61,0,98)"></div>
<div class="r" style="left:603px;top:302px;width:12px;height:12px;background:rgb(45,0,105)"></div>
<div class="r" style="left:616px;top:302px;width:12px;height:12px;background:rgb(31,0,112)"></div>
<div class="r" style="left:629px;top:302px;width:12px;height:12px;background:rgb(20,0,118)"></div>
<div class="r" style="left:642px;top:302px;width:12px;height:12px;background:rgb(9,0,123)"></div>
<div class="r" style="left:655px;top:302px;width:12px;height:12px;background:rgb(0,0,128)"></div>
<div class="r" style="left:681px;top:302px;width:12px;height:12px;background:#c0c0c0"></div>
<div class="r" style="left:486px;top:315px;width:12px;height:12px;background:#c0c0c0"></div>
<div class="r" style="left:512px;top:315px;width:12px;height:12px;background:rgb(255,0,0)"></div>
<div class="r" style="left:525px;top:315px;width:12px;height:12px;background:rgb(176,0,40)"></div>
<div class="r" style="left:538px;top:315px;width:12px;height:12px;background:rgb(128,0,64)"></div>
<div class="r" style="left:551px;top:315px;width:12px;height:12px;background:rgb(95,0,80)"></div>
<div class="r" style="left:564px;top:315px;width:12px;height:12px;background:rgb(71,0,92)"></div>
<div class="r" style="left:577px;top:315px;width:12px;height:12px;background:rgb(54,0,101)"></div>
<div class="r" style="left:590px;top:315px;width:12px;height:12px;background:rgb(40,0,108)"></div>
<div class="r" style="left:603px;top:315px;width:12px;height:12px;background:rgb(29,0,114)"></div>
<div class="r" style="left:616px;top:315px;width:12px;height:12px;background:rgb(20,0,118)"></div>
<div class="r" style="left:629px;top:315px;width:12px;height:12px;background:rgb(12,0,122)"></div>
<div class="r" style="left:642px;top:315px;width:12px;height:12px;background:rgb(6,0,125)"></div>
<div class="r" style="left:655px;top:315px;width:12px;height:12px;background:rgb(0,0,128)"></div>
<div class="r" style="left:681px;top:315px;width:12px;height:12px;background:#c0c0c0"></div>
<div class="r" style="left:486px;top:328px;width:12px;height:12px;background:#c0c0c0"></div>
<div class="r" style="left:512px;top:328px;width:12px;height:12px;background:rgb(255,0,0)"></div>
<div class="r" style="left:525px;top:328px;width:12px;height:12px;background:rgb(128,0,64)"></div>
<div class="r" style="left:538px;top:328px;width:12px;height:12px;background:rgb(79,0,88)"></div>
<div class="r" style="left:551px;top:328px;width:12px;height:12px;background:rgb(54,0,101)"></div>
<div class="r" style="left:564px;top:328px;width:12px;height:12px;background:rgb(38,0,109)"></div>
<div class="r" style="left:577px;top:328px;width:12px;height:12px;background:rgb(27,0,114)"></div>
<div class="r" style="left:590px;top:328px;width:12px;height:12px;background:rgb(20,0,118)"></div>
<div class="r" style="left:603px;top:328px;width:12px;height:12px;background:rgb(14,0,121)"></div>
<div class="r" style="left:616px;top:328px;width:12px;height:12px;background:rgb(9,0,123)"></div>
<div class="r" style="left:629px;top:328px;width:12px;height:12px;background:rgb(6,0,125)"></div>
<div class="r" style="left:642px;top:328px;width:12px;height:12px;background:rgb(3,0,127)"></div>
<div class="r" style="left:655px;top:328px;width:12px;height:12px;background:rgb(0,0,128)"></div>
<div class="r" style="left:681px;top:328px;width:12px;height:12px;background:#c0c0c0"></div>
<div class="r" style="left:486px;top:341px;width:12px;height:12px;background:#c0c0c0"></div>
<div class="r" style="left:512px;top:341px;width:12px;height:12px;background:rgb(128,0,64)"></div>
<div class="r" style="left:525px;top:341px;width:12px;height:12px;background:rgb(0,0,128)"></div>
<div class="r" style="left:538px;top:341px;width:12px;height:12px;background:rgb(0,0,128)"></div>
<div class="r" style="left:551px;top:341px;width:12px;height:12px;background:rgb(0,0,128)"></div>
<div class="r" style="left:564px;top:341px;width:12px;height:12px;background:rgb(0,0,128)"></div>
<div class="r" style="left:577px;top:341px;width:12px;height:12px;background:rgb(0,0,128)"></div>
<div class="r" style="left:590px;top:341px;width:12px;height:12px;background:rgb(0,0,128)"></div>
<div class="r" style="left:603px;top:341px;width:12px;height:12px;background:rgb(0,0,128)"></div>
<div class="r" style="left:616px;top:341px;width:12px;height:12px;background:rgb(0,0,128)"></div>
<div class="r" style="left:629px;top:341px;width:12px;height:12px;background:rgb(0,0,128)"></div>
<div class="r" style="left:642px;top:341px;width:12px;height:12px;background:rgb(0,0,128)"></div>
<div class="r" style="left:655px;top:341px;width:12px;height:12px;background:rgb(0,0,128)"></div>
<div class="r" style="left:681px;top:341px;width:12px;height:12px;background:#c0c0c0"></div>
<div class="r" style="left:486px;top:354px;width:12px;height:12px;background:#c0c0c0"></div>
<div class="r" style="left:681px;top:354px;width:12px;height:12px;background:#c0c0c0"></div>
<div class="r" style="left:486px;top:367px;width:12px;height:12px;background:#c0c0c0"></div>
<div class="r" style="left:499px;top:367px;width:12px;height:12px;background:#c0c0c0"></div>
<div class="r" style="left:512px;top:367px;width:12px;height:12px;background:#c0c0c0"></div>
<div class="r" style="left:525px;top:367px;width:12px;height:12px;background:#c0c0c0"></div>
<div class="r" style="left:538px;top:367px;width:12px;height:12px;background:#c0c0c0"></div>
<div class="r" style="left:551px;top:367px;width:12px;height:12px;background:#c0c0c0"></div>
<div class="r" style="left:564px;top:367px;width:12px;height:12px;background:#c0c0c0"></div>
<div class="r" style="left:577px;top:367px;width:12px;height:12px;background:#c0c0c0"></div>
<div class="r" style="left:590px;top:367px;width:12px;height:12px;background:#c0c0c0"></div>
<div class="r" style="left:603px;top:367px;width:12px;height:12px;background:#c0c0c0"></div>
<div class="r" style="left:616px;top:367px;width:12px;height:12px;background:#c0c0c0"></div>
<div class="r" style="left:629px;top:367px;width:12px;height:12px;background:#c0c0c0"></div>
<div class="r" style="left:642px;top:367px;width:12px;height:12px;background:#c0c0c0"></div>
<div class="r" style="left:655px;top:367px;width:12px;height:12px;background:#c0c0c0"></div>
<div class="r" style="left:668px;top:367px;width:12px;height:12px;background:#c0c0c0"></div>
<div class="r" style="left:681px;top:367px;width:12px;height:12px;background:#c0c0c0"></div>
<svg class="r" style="left:479px;top:377px;" width="3" height="65" viewBox="0 0 3 65"><path d="M0 0 L2 2" stroke="#8f9396" stroke-width="0.9"/><path d="M0 4 L2 6" stroke="#8f9396" stroke-width="0.9"/><path d="M0 8 L2 10" stroke="#8f9396" stroke-width="0.9"/><path d="M0 12 L2 14" stroke="#8f9396" stroke-width="0.9"/><path d="M0 16 L2 18" stroke="#8f9396" stroke-width="0.9"/><path d="M0 20 L2 22" stroke="#8f9396" stroke-width="0.9"/><path d="M0 24 L2 26" stroke="#8f9396" stroke-width="0.9"/><path d="M0 28 L2 30" stroke="#8f9396" stroke-width="0.9"/><path d="M0 32 L2 34" stroke="#8f9396" stroke-width="0.9"/><path d="M0 36 L2 38" stroke="#8f9396" stroke-width="0.9"/><path d="M0 40 L2 42" stroke="#8f9396" stroke-width="0.9"/><path d="M0 44 L2 46" stroke="#8f9396" stroke-width="0.9"/><path d="M0 48 L2 50" stroke="#8f9396" stroke-width="0.9"/><path d="M0 52 L2 54" stroke="#8f9396" stroke-width="0.9"/><path d="M0 56 L2 58" stroke="#8f9396" stroke-width="0.9"/><path d="M0 60 L2 62" stroke="#8f9396" stroke-width="0.9"/></svg>
<svg class="r" style="left:840px;top:645px;" width="65" height="3" viewBox="0 0 65 3"><path d="M0 0 L2 2" stroke="#8f9396" stroke-width="0.9"/><path d="M4 0 L6 2" stroke="#8f9396" stroke-width="0.9"/><path d="M8 0 L10 2" stroke="#8f9396" stroke-width="0.9"/><path d="M12 0 L14 2" stroke="#8f9396" stroke-width="0.9"/><path d="M16 0 L18 2" stroke="#8f9396" stroke-width="0.9"/><path d="M20 0 L22 2" stroke="#8f9396" stroke-width="0.9"/><path d="M24 0 L26 2" stroke="#8f9396" stroke-width="0.9"/><path d="M28 0 L30 2" stroke="#8f9396" stroke-width="0.9"/><path d="M32 0 L34 2" stroke="#8f9396" stroke-width="0.9"/><path d="M36 0 L38 2" stroke="#8f9396" stroke-width="0.9"/><path d="M40 0 L42 2" stroke="#8f9396" stroke-width="0.9"/><path d="M44 0 L46 2" stroke="#8f9396" stroke-width="0.9"/><path d="M48 0 L50 2" stroke="#8f9396" stroke-width="0.9"/><path d="M52 0 L54 2" stroke="#8f9396" stroke-width="0.9"/><path d="M56 0 L58 2" stroke="#8f9396" stroke-width="0.9"/><path d="M60 0 L62 2" stroke="#8f9396" stroke-width="0.9"/></svg>
<div class="r" style="left:483px;top:649px;width:65px;height:59px;background:#ffffff;"></div>
<svg class="r" style="left:507px;top:670px;shape-rendering:auto;" width="16" height="16" viewBox="0 0 16 16" shape-rendering="crispEdges"><rect x="0.5" y="0.5" width="15" height="15" fill="#000" stroke="#c0c0c0"/><defs><linearGradient id="sw" x1="0" y1="0" x2="1" y2="1"><stop offset="0.3" stop-color="#f00"/><stop offset="0.7" stop-color="#000080"/></linearGradient></defs><rect x="2" y="2" width="12" height="12" fill="url(#sw)"/></svg>
<div class="r" style="left:548px;top:649px;width:65px;height:59px;background:#e0e0e0;"></div>
<svg class="r" style="left:572px;top:670px;shape-rendering:auto;" width="16" height="16" viewBox="0 0 16 16" shape-rendering="crispEdges"><rect x="0.5" y="0.5" width="15" height="15" fill="#000" stroke="#c0c0c0"/><defs><linearGradient id="sw" x1="0" y1="0" x2="1" y2="1"><stop offset="0.3" stop-color="#f00"/><stop offset="0.7" stop-color="#000080"/></linearGradient></defs><rect x="2" y="2" width="12" height="12" fill="url(#sw)"/></svg>
<div class="r" style="left:613px;top:649px;width:65px;height:59px;background:#c0c0c0;"></div>
<svg class="r" style="left:637px;top:670px;shape-rendering:auto;" width="16" height="16" viewBox="0 0 16 16" shape-rendering="crispEdges"><rect x="0.5" y="0.5" width="15" height="15" fill="#000" stroke="#c0c0c0"/><defs><linearGradient id="sw" x1="0" y1="0" x2="1" y2="1"><stop offset="0.3" stop-color="#f00"/><stop offset="0.7" stop-color="#000080"/></linearGradient></defs><rect x="2" y="2" width="12" height="12" fill="url(#sw)"/></svg>
<div class="r" style="left:678px;top:649px;width:65px;height:59px;background:#808080;"></div>
<svg class="r" style="left:702px;top:670px;shape-rendering:auto;" width="16" height="16" viewBox="0 0 16 16" shape-rendering="crispEdges"><rect x="0.5" y="0.5" width="15" height="15" fill="#000" stroke="#c0c0c0"/><defs><linearGradient id="sw" x1="0" y1="0" x2="1" y2="1"><stop offset="0.3" stop-color="#f00"/><stop offset="0.7" stop-color="#000080"/></linearGradient></defs><rect x="2" y="2" width="12" height="12" fill="url(#sw)"/></svg>
<div class="r" style="left:743px;top:649px;width:65px;height:59px;background:#000000;"></div>
<svg class="r" style="left:767px;top:670px;shape-rendering:auto;" width="16" height="16" viewBox="0 0 16 16" shape-rendering="crispEdges"><rect x="0.5" y="0.5" width="15" height="15" fill="#000" stroke="#c0c0c0"/><defs><linearGradient id="sw" x1="0" y1="0" x2="1" y2="1"><stop offset="0.3" stop-color="#f00"/><stop offset="0.7" stop-color="#000080"/></linearGradient></defs><rect x="2" y="2" width="12" height="12" fill="url(#sw)"/></svg>
<div class="r" style="left:808px;top:649px;width:66px;height:59px;background:#ffff00;"></div>
<svg class="r" style="left:833px;top:670px;shape-rendering:auto;" width="16" height="16" viewBox="0 0 16 16" shape-rendering="crispEdges"><rect x="0.5" y="0.5" width="15" height="15" fill="#000" stroke="#c0c0c0"/><defs><linearGradient id="sw" x1="0" y1="0" x2="1" y2="1"><stop offset="0.3" stop-color="#f00"/><stop offset="0.7" stop-color="#000080"/></linearGradient></defs><rect x="2" y="2" width="12" height="12" fill="url(#sw)"/></svg>
<div class="r" style="left:874px;top:649px;width:65px;height:59px;background:#808000;"></div>
<svg class="r" style="left:898px;top:670px;shape-rendering:auto;" width="16" height="16" viewBox="0 0 16 16" shape-rendering="crispEdges"><rect x="0.5" y="0.5" width="15" height="15" fill="#000" stroke="#c0c0c0"/><defs><linearGradient id="sw" x1="0" y1="0" x2="1" y2="1"><stop offset="0.3" stop-color="#f00"/><stop offset="0.7" stop-color="#000080"/></linearGradient></defs><rect x="2" y="2" width="12" height="12" fill="url(#sw)"/></svg>
<div class="r" style="left:939px;top:649px;width:65px;height:59px;background:#800000;"></div>
<svg class="r" style="left:963px;top:670px;shape-rendering:auto;" width="16" height="16" viewBox="0 0 16 16" shape-rendering="crispEdges"><rect x="0.5" y="0.5" width="15" height="15" fill="#000" stroke="#c0c0c0"/><defs><linearGradient id="sw" x1="0" y1="0" x2="1" y2="1"><stop offset="0.3" stop-color="#f00"/><stop offset="0.7" stop-color="#000080"/></linearGradient></defs><rect x="2" y="2" width="12" height="12" fill="url(#sw)"/></svg>
<div class="r" style="left:1004px;top:649px;width:65px;height:59px;background:#008000;"></div>
<svg class="r" style="left:1028px;top:670px;shape-rendering:auto;" width="16" height="16" viewBox="0 0 16 16" shape-rendering="crispEdges"><rect x="0.5" y="0.5" width="15" height="15" fill="#000" stroke="#c0c0c0"/><defs><linearGradient id="sw" x1="0" y1="0" x2="1" y2="1"><stop offset="0.3" stop-color="#f00"/><stop offset="0.7" stop-color="#000080"/></linearGradient></defs><rect x="2" y="2" width="12" height="12" fill="url(#sw)"/></svg>
<div class="r" style="left:1069px;top:649px;width:65px;height:59px;background:#000080;"></div>
<svg class="r" style="left:1093px;top:670px;shape-rendering:auto;" width="16" height="16" viewBox="0 0 16 16" shape-rendering="crispEdges"><rect x="0.5" y="0.5" width="15" height="15" fill="#000" stroke="#c0c0c0"/><defs><linearGradient id="sw" x1="0" y1="0" x2="1" y2="1"><stop offset="0.3" stop-color="#f00"/><stop offset="0.7" stop-color="#000080"/></linearGradient></defs><rect x="2" y="2" width="12" height="12" fill="url(#sw)"/></svg>
<div class="r" style="left:1134px;top:649px;width:65px;height:59px;background:#008080;"></div>
<svg class="r" style="left:1158px;top:670px;shape-rendering:auto;" width="16" height="16" viewBox="0 0 16 16" shape-rendering="crispEdges"><rect x="0.5" y="0.5" width="15" height="15" fill="#000" stroke="#c0c0c0"/><defs><linearGradient id="sw" x1="0" y1="0" x2="1" y2="1"><stop offset="0.3" stop-color="#f00"/><stop offset="0.7" stop-color="#000080"/></linearGradient></defs><rect x="2" y="2" width="12" height="12" fill="url(#sw)"/></svg>
<div class="r" style="left:1199px;top:649px;width:66px;height:59px;background:#8000ff;"></div>
<svg class="r" style="left:1224px;top:670px;shape-rendering:auto;" width="16" height="16" viewBox="0 0 16 16" shape-rendering="crispEdges"><rect x="0.5" y="0.5" width="15" height="15" fill="#000" stroke="#c0c0c0"/><defs><linearGradient id="sw" x1="0" y1="0" x2="1" y2="1"><stop offset="0.3" stop-color="#f00"/><stop offset="0.7" stop-color="#000080"/></linearGradient></defs><rect x="2" y="2" width="12" height="12" fill="url(#sw)"/></svg>
<div class="t" style="left:9.3px;top:712.80px;font-size:13px;line-height:13px;color:#232629;font-weight:normal;font-family:'Liberation Sans';font-style:normal;transform:scaleX(1.097);transform-origin:0 0;">Package dependencies, compiler &amp; linker options, output path override</div>
<svg class="r" style="left:1253px;top:718px;" width="13" height="13" viewBox="0 0 13 13"><path d="M1 12 L12 1 M5 12 L12 5 M9 12 L12 9" stroke="#9a9da0" stroke-width="1.3"/></svg></body></html>
